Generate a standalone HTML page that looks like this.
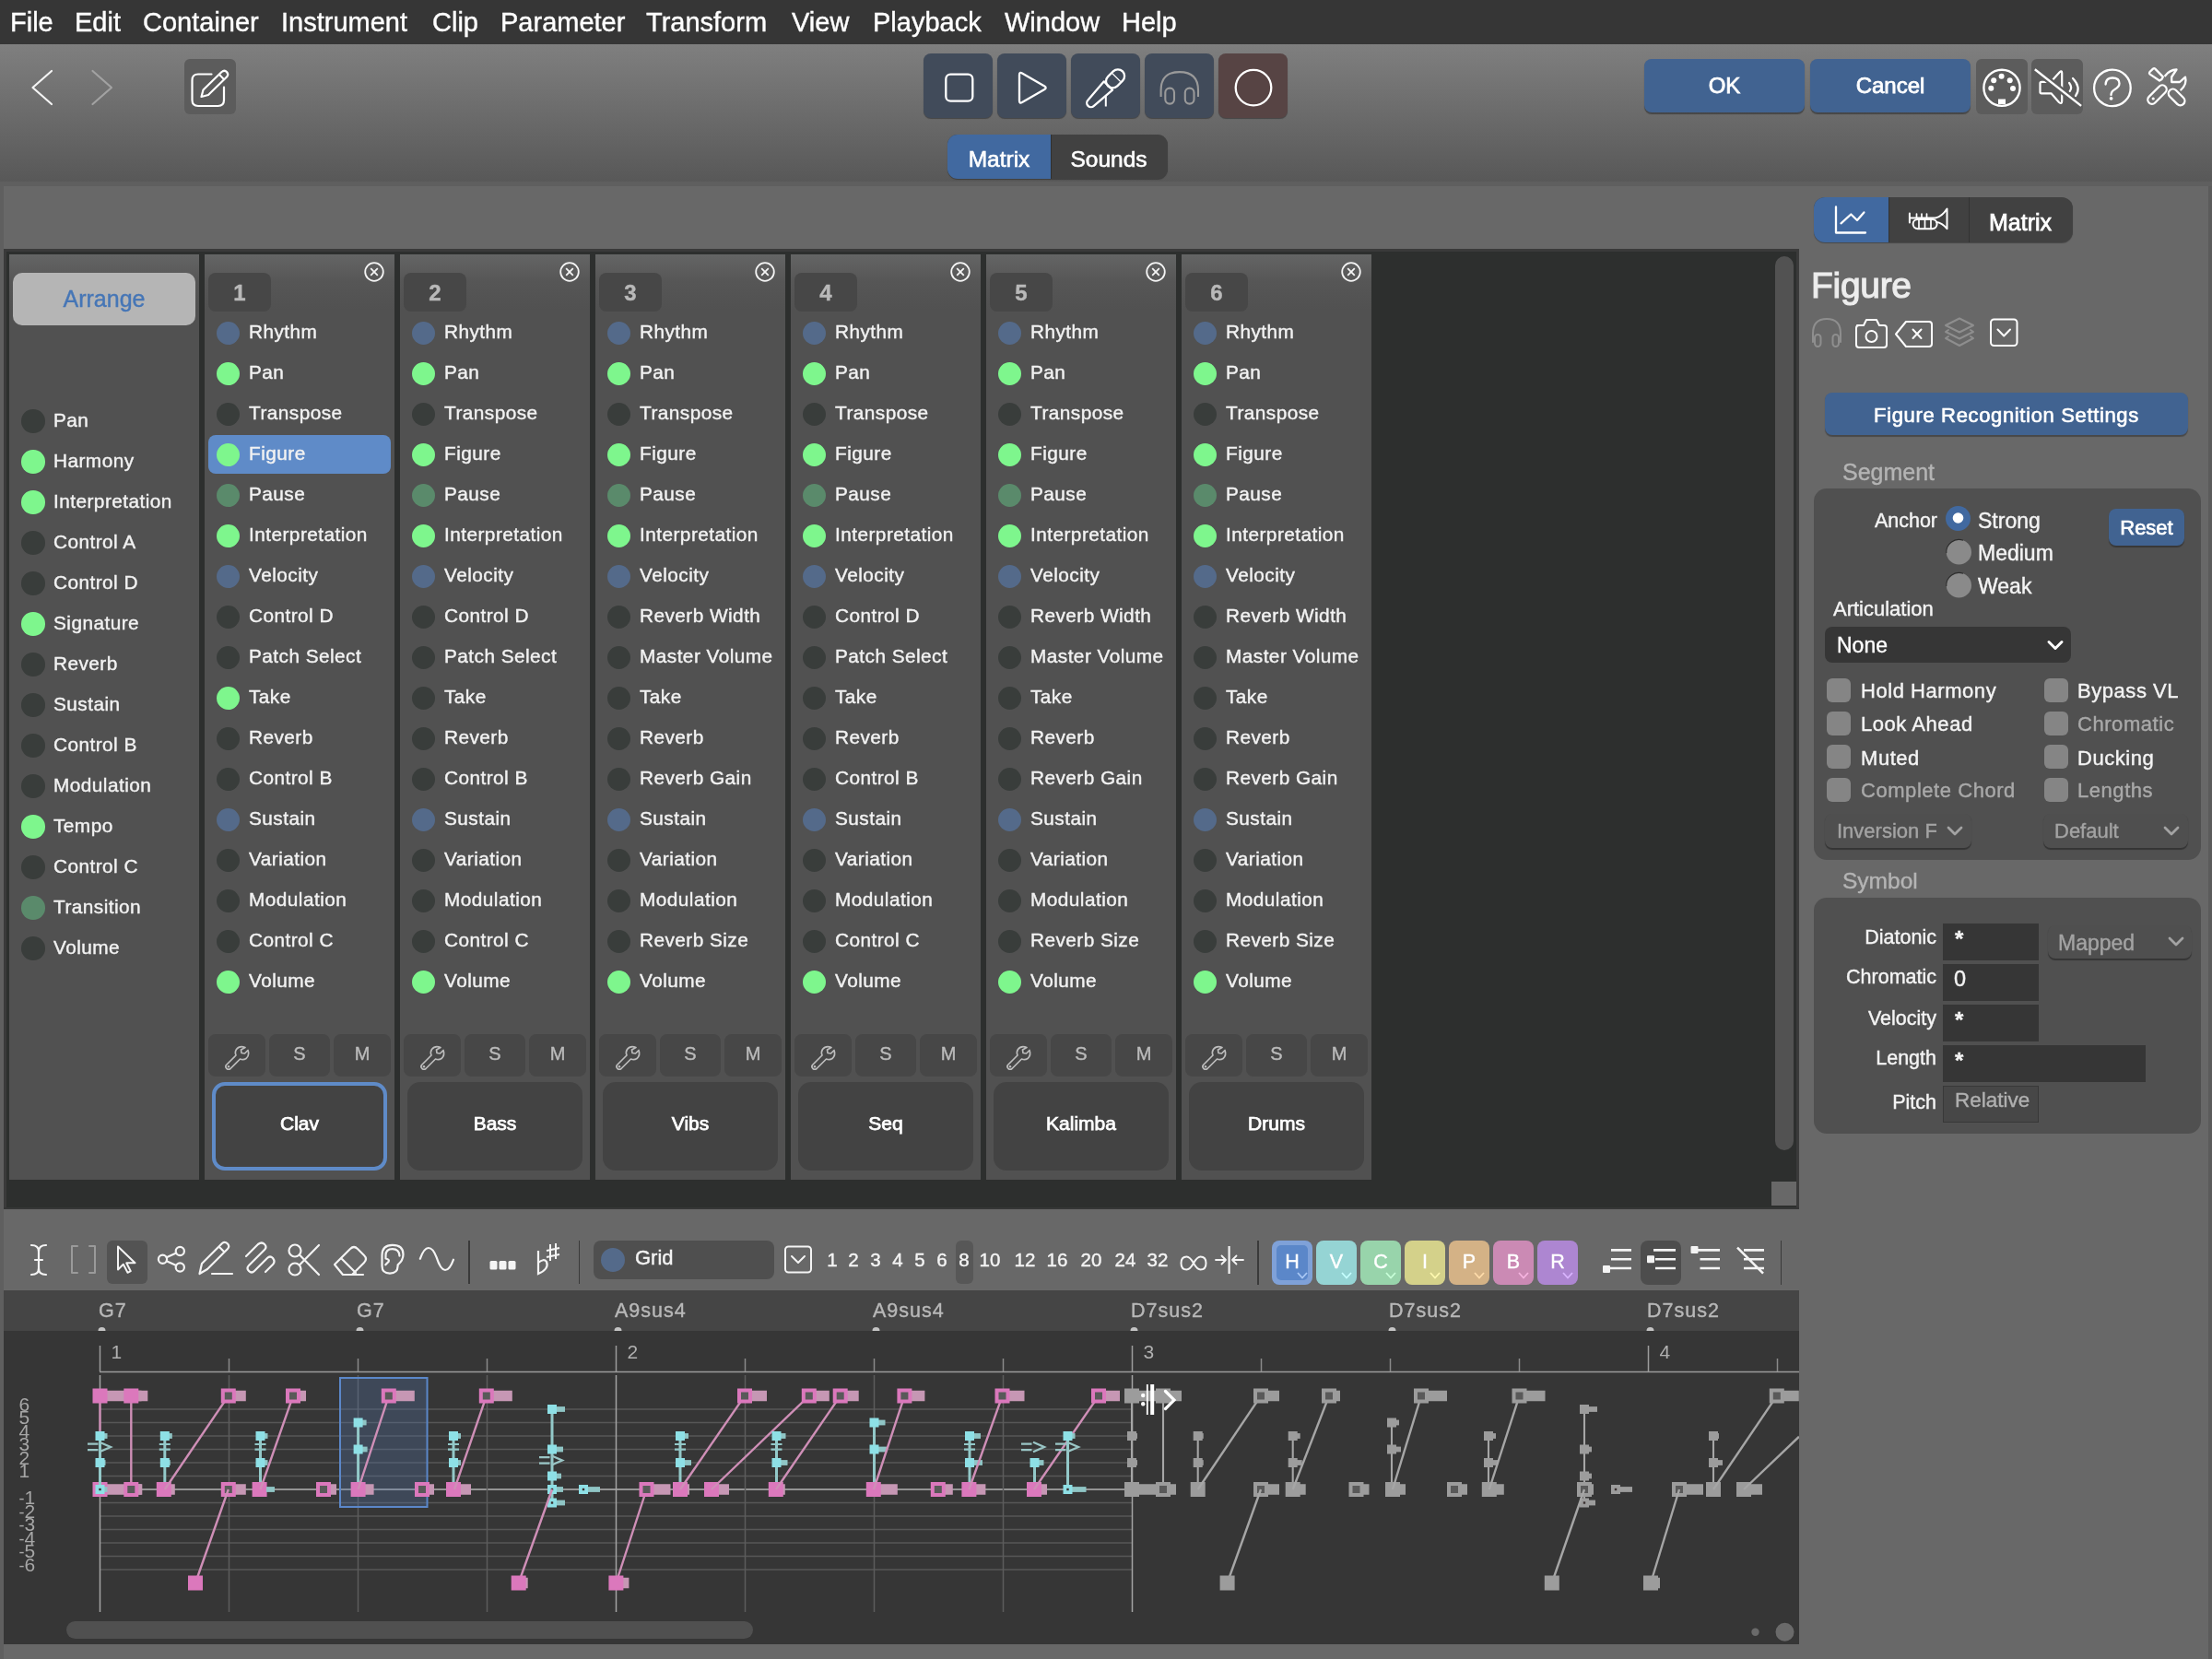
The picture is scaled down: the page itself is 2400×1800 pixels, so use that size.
<!DOCTYPE html><html><head><meta charset="utf-8"><style>
html,body{margin:0;padding:0;}
body{width:2400px;height:1800px;overflow:hidden;position:relative;background:#686868;font-family:"Liberation Sans",sans-serif;-webkit-font-smoothing:antialiased;}
.t{position:absolute;white-space:nowrap;-webkit-text-stroke:0.4px currentColor;will-change:transform;}
.r{position:absolute;}
</style></head><body>
<div class="r" style="left:0px;top:0px;width:2400px;height:48px;background:#363636;border-radius:0px;"></div>
<div class="t" style="left:11.0px;top:10.0px;font-size:29px;line-height:29px;color:#ffffff;font-weight:normal;">File</div>
<div class="t" style="left:81.0px;top:10.0px;font-size:29px;line-height:29px;color:#ffffff;font-weight:normal;">Edit</div>
<div class="t" style="left:155.0px;top:10.0px;font-size:29px;line-height:29px;color:#ffffff;font-weight:normal;">Container</div>
<div class="t" style="left:305.0px;top:10.0px;font-size:29px;line-height:29px;color:#ffffff;font-weight:normal;">Instrument</div>
<div class="t" style="left:468.5px;top:10.0px;font-size:29px;line-height:29px;color:#ffffff;font-weight:normal;">Clip</div>
<div class="t" style="left:542.5px;top:10.0px;font-size:29px;line-height:29px;color:#ffffff;font-weight:normal;">Parameter</div>
<div class="t" style="left:700.5px;top:10.0px;font-size:29px;line-height:29px;color:#ffffff;font-weight:normal;">Transform</div>
<div class="t" style="left:859.0px;top:10.0px;font-size:29px;line-height:29px;color:#ffffff;font-weight:normal;">View</div>
<div class="t" style="left:946.5px;top:10.0px;font-size:29px;line-height:29px;color:#ffffff;font-weight:normal;">Playback</div>
<div class="t" style="left:1089.5px;top:10.0px;font-size:29px;line-height:29px;color:#ffffff;font-weight:normal;">Window</div>
<div class="t" style="left:1216.5px;top:10.0px;font-size:29px;line-height:29px;color:#ffffff;font-weight:normal;">Help</div>
<div class="r" style="left:0px;top:48px;width:2400px;height:149px;background:linear-gradient(#7f7f7f,#585858);border-radius:0px;"></div>
<div class="r" style="left:0px;top:197px;width:2400px;height:5px;background:#5f5f5f;border-radius:0px;"></div>
<div class="r" style="left:0px;top:197px;width:4px;height:1603px;background:#5f5f5f;border-radius:0px;"></div>
<svg class="r" style="left:20px;top:60px;" width="120" height="70" viewBox="0 0 120 70"><path d="M36,17 L15.5,35 L36,53" fill="none" stroke="#f4f4f4" stroke-width="2.2" stroke-linecap="round" stroke-linejoin="round"/><path d="M80.5,17 L101,35 L80.5,53" fill="none" stroke="#a2a2a2" stroke-width="2.2" stroke-linecap="round" stroke-linejoin="round"/></svg>
<div class="r" style="left:200px;top:64px;width:56px;height:60px;background:#5c5c5c;border-radius:6px;"></div>
<svg class="r" style="left:200px;top:64px;" width="56" height="60" viewBox="0 0 56 60"><path d="M29.5,16.5 H15 Q8.5,16.5 8.5,23 V44.5 Q8.5,51 15,51 H36.5 Q43,51 43,44.5 V30.5" fill="none" stroke="#fff" stroke-width="2.2" stroke-linecap="round"/><path d="M18.5,41 L20.5,33.5 L40.5,14 Q43.5,11.5 46,14 Q48.5,16.8 46,19.5 L26,39 Z" fill="none" stroke="#fff" stroke-width="2.2" stroke-linejoin="round"/><path d="M37.8,16.8 L43.2,22.2" stroke="#fff" stroke-width="2"/></svg>
<div class="r" style="left:1002px;top:58px;width:75px;height:70px;background:#414b5a;border-radius:8px;box-shadow:0 1px 1px rgba(0,0,0,0.35);"></div>
<div class="r" style="left:1082px;top:58px;width:75px;height:70px;background:#414b5a;border-radius:8px;box-shadow:0 1px 1px rgba(0,0,0,0.35);"></div>
<div class="r" style="left:1162px;top:58px;width:75px;height:70px;background:#414b5a;border-radius:8px;box-shadow:0 1px 1px rgba(0,0,0,0.35);"></div>
<div class="r" style="left:1242px;top:58px;width:75px;height:70px;background:#414b5a;border-radius:8px;box-shadow:0 1px 1px rgba(0,0,0,0.35);"></div>
<div class="r" style="left:1322px;top:58px;width:75px;height:70px;background:#574444;border-radius:8px;box-shadow:0 1px 1px rgba(0,0,0,0.35);"></div>
<svg class="r" style="left:1002px;top:58px;" width="75" height="70" viewBox="0 0 75 70"><rect x="24.3" y="22.7" width="29" height="29" rx="5" fill="none" stroke="#fff" stroke-width="2.3"/></svg>
<svg class="r" style="left:1082px;top:58px;" width="75" height="70" viewBox="0 0 75 70"><path d="M24,23.2 Q24,19.8 27,21.4 L51.3,35.4 Q54,37.2 51.3,39 L27,53 Q24,54.6 24,51.3 Z" fill="none" stroke="#fff" stroke-width="2.3" stroke-linejoin="round"/></svg>
<svg class="r" style="left:1162px;top:58px;" width="75" height="70" viewBox="0 0 75 70"><g transform="translate(21.7,53.7) rotate(45)" fill="none" stroke="#fff" stroke-width="2.3" stroke-linejoin="round"><path d="M-4.5,0 A4.5,4.5 0 0 0 4.5,0 L6.5,-26.5 H-6.5 Z"/><rect x="-7.2" y="-48.5" width="14.4" height="22.5" rx="7.2"/><path d="M-6.2,-39 H6.2" stroke-width="1.1"/></g><path d="M37.8,46 V57.5" stroke="#fff" stroke-width="2"/></svg>
<svg class="r" style="left:1242px;top:58px;" width="75" height="70" viewBox="0 0 75 70"><path d="M17.6,47 V40 Q17.6,20.1 37.8,20.1 Q58,20.1 58,40 V47" fill="none" stroke="#9a9a9a" stroke-width="2.1"/><rect x="22.3" y="37.6" width="9.7" height="17" rx="4.8" fill="none" stroke="#9a9a9a" stroke-width="2.1"/><rect x="43.8" y="37.6" width="9.7" height="17" rx="4.8" fill="none" stroke="#9a9a9a" stroke-width="2.1"/></svg>
<svg class="r" style="left:1322px;top:58px;" width="75" height="70" viewBox="0 0 75 70"><circle cx="38" cy="37.1" r="19.3" fill="none" stroke="#fff" stroke-width="2.3"/></svg>
<div class="r" style="left:1028px;top:146px;width:239px;height:48px;background:#414141;border-radius:11px;box-shadow:0 1px 1px rgba(0,0,0,0.3);"></div>
<div class="r" style="left:1028px;top:146px;width:112px;height:48px;background:#4169a0;border-radius:11px;border-top-right-radius:0;border-bottom-right-radius:0;"></div>
<div class="r" style="left:1140px;top:146px;width:1px;height:48px;background:#2f2f2f;border-radius:0px;"></div>
<div class="t" style="left:1028.0px;width:112px;text-align:center;top:161.3px;font-size:24.5px;line-height:24.5px;color:#ffffff;font-weight:normal;-webkit-text-stroke:0.6px #fff;">Matrix</div>
<div class="t" style="left:1140.0px;width:126px;text-align:center;top:161.3px;font-size:24.5px;line-height:24.5px;color:#ffffff;font-weight:normal;-webkit-text-stroke:0.6px #fff;">Sounds</div>
<div class="r" style="left:1784px;top:64px;width:174px;height:58px;background:#416391;border-radius:8px;box-shadow:0 1.5px 1px rgba(0,0,0,0.35);"></div>
<div class="r" style="left:1964px;top:64px;width:174px;height:58px;background:#416391;border-radius:8px;box-shadow:0 1.5px 1px rgba(0,0,0,0.35);"></div>
<div class="t" style="left:1786.0px;width:170px;text-align:center;top:80.7px;font-size:24px;line-height:24px;color:#ffffff;font-weight:normal;-webkit-text-stroke:0.75px #fff;">OK</div>
<div class="t" style="left:1966.0px;width:170px;text-align:center;top:80.7px;font-size:24px;line-height:24px;color:#ffffff;font-weight:normal;-webkit-text-stroke:0.75px #fff;">Cancel</div>
<div class="r" style="left:2144px;top:64px;width:56px;height:60px;background:#5c5c5c;border-radius:6px;"></div>
<div class="r" style="left:2204px;top:64px;width:56px;height:60px;background:#5c5c5c;border-radius:6px;"></div>
<svg class="r" style="left:2144px;top:64px;" width="56" height="60" viewBox="0 0 56 60"><circle cx="28" cy="31.3" r="19.6" fill="none" stroke="#fff" stroke-width="2.4"/><circle cx="27.6" cy="18.7" r="3" fill="#fff"/><circle cx="19.2" cy="23.2" r="3" fill="#fff"/><circle cx="36.7" cy="23.2" r="3" fill="#fff"/><circle cx="16.3" cy="31.7" r="3" fill="#fff"/><circle cx="40" cy="31.9" r="3" fill="#fff"/><rect x="24" y="43.5" width="8" height="5.5" fill="#fff"/></svg>
<svg class="r" style="left:2204px;top:64px;" width="56" height="60" viewBox="0 0 56 60"><path d="M9.5,26.5 Q9.5,24.9 11,24.9 H21 L30.5,14.5 Q33.2,12 33.2,15 V45.5 Q33.2,49.5 30,47 L21.5,37.3 H11 Q9.5,37.3 9.5,36 Z" fill="none" stroke="#fff" stroke-width="2.2" stroke-linejoin="round"/><path d="M41.1,26 Q44.8,31 41.7,35" fill="none" stroke="#fff" stroke-width="2.2" stroke-linecap="round"/><path d="M45,21 Q54.5,31 48,40" fill="none" stroke="#fff" stroke-width="2.2" stroke-linecap="round"/><path d="M3.8,11.3 L54.1,50.9" stroke="#5c5c5c" stroke-width="7"/><path d="M3.8,11.3 L54.1,50.9" stroke="#fff" stroke-width="2.4"/></svg>
<svg class="r" style="left:2264px;top:64px;" width="60" height="60" viewBox="0 0 60 60"><circle cx="27.9" cy="31.4" r="19.8" fill="none" stroke="#fff" stroke-width="2.3"/><path d="M20.6,27.5 Q20.8,20.5 28,20.5 Q35.5,20.5 35.5,26.5 Q35.5,30 30.5,33 Q26.5,35.2 26.5,39" fill="none" stroke="#fff" stroke-width="2.3" stroke-linecap="round"/><circle cx="26.6" cy="42.8" r="1.9" fill="#fff"/></svg>
<svg class="r" style="left:2324px;top:64px;" width="60" height="60" viewBox="0 0 60 60"><g fill="none" stroke="#fff" stroke-width="2.3" stroke-linejoin="round" stroke-linecap="round"><path d="M8.4,16.4 Q7.5,15.2 8.5,14 L12,10.6 Q13.2,9.7 14.3,10.6 L22.8,19.4 L21.5,22 L19,23.5 Z"/><rect x="-10.5" y="-4.8" width="21" height="9.6" rx="4.8" transform="translate(37.6,41.4) rotate(45)"/><rect x="-12.5" y="-4.6" width="25" height="9.2" rx="4.6" transform="translate(16.5,38.6) rotate(-45)"/><path d="M25.2,18.2 Q30,11.8 37.5,11.5 L32.2,19.5 V25 H41 L47,19.6 Q49.2,27 42.3,33.5"/></g><circle cx="12.2" cy="43" r="1.6" fill="#fff"/></svg>
<div class="r" style="left:4px;top:270px;width:1948px;height:1042px;background:#2d2f2e;border-radius:0px;"></div>
<div class="r" style="left:10px;top:276px;width:206px;height:1004px;background:linear-gradient(#646565 0px,#565656 30px,#515151 60px);border-radius:0px;"></div>
<div class="r" style="left:14px;top:296px;width:198px;height:57px;background:#b5b5b5;border-radius:10px;"></div>
<div class="t" style="left:14.0px;width:198px;text-align:center;top:311.8px;font-size:25px;line-height:25px;color:#4676b6;font-weight:normal;">Arrange</div>
<div class="r" style="left:23.25px;top:444.45px;width:25.5px;height:25.5px;background:#393d3b;border-radius:12.75px;"></div>
<div class="t" style="left:58px;top:445.9px;font-size:20.8px;line-height:20.8px;color:#f2f2f2;font-weight:normal;letter-spacing:0.45px;">Pan</div>
<div class="r" style="left:23.25px;top:488.45px;width:25.5px;height:25.5px;background:#7ef68d;border-radius:12.75px;"></div>
<div class="t" style="left:58px;top:489.9px;font-size:20.8px;line-height:20.8px;color:#f2f2f2;font-weight:normal;letter-spacing:0.45px;">Harmony</div>
<div class="r" style="left:23.25px;top:532.45px;width:25.5px;height:25.5px;background:#7ef68d;border-radius:12.75px;"></div>
<div class="t" style="left:58px;top:533.9px;font-size:20.8px;line-height:20.8px;color:#f2f2f2;font-weight:normal;letter-spacing:0.45px;">Interpretation</div>
<div class="r" style="left:23.25px;top:576.45px;width:25.5px;height:25.5px;background:#393d3b;border-radius:12.75px;"></div>
<div class="t" style="left:58px;top:577.9px;font-size:20.8px;line-height:20.8px;color:#f2f2f2;font-weight:normal;letter-spacing:0.45px;">Control A</div>
<div class="r" style="left:23.25px;top:620.45px;width:25.5px;height:25.5px;background:#393d3b;border-radius:12.75px;"></div>
<div class="t" style="left:58px;top:621.9px;font-size:20.8px;line-height:20.8px;color:#f2f2f2;font-weight:normal;letter-spacing:0.45px;">Control D</div>
<div class="r" style="left:23.25px;top:664.45px;width:25.5px;height:25.5px;background:#7ef68d;border-radius:12.75px;"></div>
<div class="t" style="left:58px;top:665.9px;font-size:20.8px;line-height:20.8px;color:#f2f2f2;font-weight:normal;letter-spacing:0.45px;">Signature</div>
<div class="r" style="left:23.25px;top:708.45px;width:25.5px;height:25.5px;background:#393d3b;border-radius:12.75px;"></div>
<div class="t" style="left:58px;top:709.9px;font-size:20.8px;line-height:20.8px;color:#f2f2f2;font-weight:normal;letter-spacing:0.45px;">Reverb</div>
<div class="r" style="left:23.25px;top:752.45px;width:25.5px;height:25.5px;background:#393d3b;border-radius:12.75px;"></div>
<div class="t" style="left:58px;top:753.9px;font-size:20.8px;line-height:20.8px;color:#f2f2f2;font-weight:normal;letter-spacing:0.45px;">Sustain</div>
<div class="r" style="left:23.25px;top:796.45px;width:25.5px;height:25.5px;background:#393d3b;border-radius:12.75px;"></div>
<div class="t" style="left:58px;top:797.9px;font-size:20.8px;line-height:20.8px;color:#f2f2f2;font-weight:normal;letter-spacing:0.45px;">Control B</div>
<div class="r" style="left:23.25px;top:840.45px;width:25.5px;height:25.5px;background:#393d3b;border-radius:12.75px;"></div>
<div class="t" style="left:58px;top:841.9px;font-size:20.8px;line-height:20.8px;color:#f2f2f2;font-weight:normal;letter-spacing:0.45px;">Modulation</div>
<div class="r" style="left:23.25px;top:884.45px;width:25.5px;height:25.5px;background:#7ef68d;border-radius:12.75px;"></div>
<div class="t" style="left:58px;top:885.9px;font-size:20.8px;line-height:20.8px;color:#f2f2f2;font-weight:normal;letter-spacing:0.45px;">Tempo</div>
<div class="r" style="left:23.25px;top:928.45px;width:25.5px;height:25.5px;background:#393d3b;border-radius:12.75px;"></div>
<div class="t" style="left:58px;top:929.9px;font-size:20.8px;line-height:20.8px;color:#f2f2f2;font-weight:normal;letter-spacing:0.45px;">Control C</div>
<div class="r" style="left:23.25px;top:972.45px;width:25.5px;height:25.5px;background:#5a8a6b;border-radius:12.75px;"></div>
<div class="t" style="left:58px;top:973.9px;font-size:20.8px;line-height:20.8px;color:#f2f2f2;font-weight:normal;letter-spacing:0.45px;">Transition</div>
<div class="r" style="left:23.25px;top:1016.45px;width:25.5px;height:25.5px;background:#393d3b;border-radius:12.75px;"></div>
<div class="t" style="left:58px;top:1017.9px;font-size:20.8px;line-height:20.8px;color:#f2f2f2;font-weight:normal;letter-spacing:0.45px;">Volume</div>
<div class="r" style="left:222px;top:276px;width:206px;height:1004px;background:linear-gradient(#646565 0px,#565656 30px,#515151 60px);border-radius:0px;"></div>
<div class="r" style="left:226px;top:296px;width:68px;height:42px;background:#474747;border-radius:8px;"></div>
<div class="t" style="left:225.7px;width:68px;text-align:center;top:305.7px;font-size:24px;line-height:24px;color:#b9b9b9;font-weight:bold;">1</div>
<svg class="r" style="left:394px;top:283px;" width="24" height="24" viewBox="0 0 24 24"><circle cx="12" cy="12" r="9.8" fill="none" stroke="#f4f4f4" stroke-width="1.8"/><path d="M8.2,8.2 L15.8,15.8 M15.8,8.2 L8.2,15.8" stroke="#f4f4f4" stroke-width="1.8"/></svg>
<div class="r" style="left:226px;top:472px;width:198px;height:42px;background:#5f8bc8;border-radius:8px;"></div>
<div class="r" style="left:234.75px;top:348.55px;width:25.5px;height:25.5px;background:#546a8a;border-radius:12.75px;"></div>
<div class="t" style="left:270.1px;top:350.0px;font-size:20.8px;line-height:20.8px;color:#f2f2f2;font-weight:normal;letter-spacing:0.45px;">Rhythm</div>
<div class="r" style="left:234.75px;top:392.55px;width:25.5px;height:25.5px;background:#7ef68d;border-radius:12.75px;"></div>
<div class="t" style="left:270.1px;top:394.0px;font-size:20.8px;line-height:20.8px;color:#f2f2f2;font-weight:normal;letter-spacing:0.45px;">Pan</div>
<div class="r" style="left:234.75px;top:436.55px;width:25.5px;height:25.5px;background:#393d3b;border-radius:12.75px;"></div>
<div class="t" style="left:270.1px;top:438.0px;font-size:20.8px;line-height:20.8px;color:#f2f2f2;font-weight:normal;letter-spacing:0.45px;">Transpose</div>
<div class="r" style="left:234.75px;top:480.55px;width:25.5px;height:25.5px;background:#7ef68d;border-radius:12.75px;"></div>
<div class="t" style="left:270.1px;top:482.0px;font-size:20.8px;line-height:20.8px;color:#f2f2f2;font-weight:normal;letter-spacing:0.45px;">Figure</div>
<div class="r" style="left:234.75px;top:524.55px;width:25.5px;height:25.5px;background:#5a8a6b;border-radius:12.75px;"></div>
<div class="t" style="left:270.1px;top:526.0px;font-size:20.8px;line-height:20.8px;color:#f2f2f2;font-weight:normal;letter-spacing:0.45px;">Pause</div>
<div class="r" style="left:234.75px;top:568.55px;width:25.5px;height:25.5px;background:#7ef68d;border-radius:12.75px;"></div>
<div class="t" style="left:270.1px;top:570.0px;font-size:20.8px;line-height:20.8px;color:#f2f2f2;font-weight:normal;letter-spacing:0.45px;">Interpretation</div>
<div class="r" style="left:234.75px;top:612.55px;width:25.5px;height:25.5px;background:#546a8a;border-radius:12.75px;"></div>
<div class="t" style="left:270.1px;top:614.0px;font-size:20.8px;line-height:20.8px;color:#f2f2f2;font-weight:normal;letter-spacing:0.45px;">Velocity</div>
<div class="r" style="left:234.75px;top:656.55px;width:25.5px;height:25.5px;background:#393d3b;border-radius:12.75px;"></div>
<div class="t" style="left:270.1px;top:658.0px;font-size:20.8px;line-height:20.8px;color:#f2f2f2;font-weight:normal;letter-spacing:0.45px;">Control D</div>
<div class="r" style="left:234.75px;top:700.55px;width:25.5px;height:25.5px;background:#393d3b;border-radius:12.75px;"></div>
<div class="t" style="left:270.1px;top:702.0px;font-size:20.8px;line-height:20.8px;color:#f2f2f2;font-weight:normal;letter-spacing:0.45px;">Patch Select</div>
<div class="r" style="left:234.75px;top:744.55px;width:25.5px;height:25.5px;background:#7ef68d;border-radius:12.75px;"></div>
<div class="t" style="left:270.1px;top:746.0px;font-size:20.8px;line-height:20.8px;color:#f2f2f2;font-weight:normal;letter-spacing:0.45px;">Take</div>
<div class="r" style="left:234.75px;top:788.55px;width:25.5px;height:25.5px;background:#393d3b;border-radius:12.75px;"></div>
<div class="t" style="left:270.1px;top:790.0px;font-size:20.8px;line-height:20.8px;color:#f2f2f2;font-weight:normal;letter-spacing:0.45px;">Reverb</div>
<div class="r" style="left:234.75px;top:832.55px;width:25.5px;height:25.5px;background:#393d3b;border-radius:12.75px;"></div>
<div class="t" style="left:270.1px;top:834.0px;font-size:20.8px;line-height:20.8px;color:#f2f2f2;font-weight:normal;letter-spacing:0.45px;">Control B</div>
<div class="r" style="left:234.75px;top:876.55px;width:25.5px;height:25.5px;background:#546a8a;border-radius:12.75px;"></div>
<div class="t" style="left:270.1px;top:878.0px;font-size:20.8px;line-height:20.8px;color:#f2f2f2;font-weight:normal;letter-spacing:0.45px;">Sustain</div>
<div class="r" style="left:234.75px;top:920.55px;width:25.5px;height:25.5px;background:#393d3b;border-radius:12.75px;"></div>
<div class="t" style="left:270.1px;top:922.0px;font-size:20.8px;line-height:20.8px;color:#f2f2f2;font-weight:normal;letter-spacing:0.45px;">Variation</div>
<div class="r" style="left:234.75px;top:964.55px;width:25.5px;height:25.5px;background:#393d3b;border-radius:12.75px;"></div>
<div class="t" style="left:270.1px;top:966.0px;font-size:20.8px;line-height:20.8px;color:#f2f2f2;font-weight:normal;letter-spacing:0.45px;">Modulation</div>
<div class="r" style="left:234.75px;top:1008.55px;width:25.5px;height:25.5px;background:#393d3b;border-radius:12.75px;"></div>
<div class="t" style="left:270.1px;top:1010.0px;font-size:20.8px;line-height:20.8px;color:#f2f2f2;font-weight:normal;letter-spacing:0.45px;">Control C</div>
<div class="r" style="left:234.75px;top:1052.55px;width:25.5px;height:25.5px;background:#7ef68d;border-radius:12.75px;"></div>
<div class="t" style="left:270.1px;top:1054.0px;font-size:20.8px;line-height:20.8px;color:#f2f2f2;font-weight:normal;letter-spacing:0.45px;">Volume</div>
<div class="r" style="left:226px;top:1122px;width:62px;height:46px;background:#474747;border-radius:8px;"></div>
<div class="r" style="left:292px;top:1122px;width:66px;height:46px;background:#474747;border-radius:8px;"></div>
<div class="r" style="left:362px;top:1122px;width:62px;height:46px;background:#474747;border-radius:8px;"></div>
<svg class="r" style="left:226px;top:1122px;" width="62" height="46" viewBox="0 0 62 46"><path d="M40,14.5 Q34,12 30.5,16.5 Q28.5,19.5 30,23 L19.5,33.5 Q18,35.5 20,37.5 Q22,39 24,37.5 L34.5,27 Q38,28.5 41,26.5 Q45,23 43,17.5 L39.5,21 L36,20.5 L35.5,17 Z" fill="none" stroke="#bdbdbd" stroke-width="1.7" stroke-linejoin="round"/><circle cx="22" cy="35.3" r="1.2" fill="#bdbdbd"/></svg>
<div class="t" style="left:292.0px;width:66px;text-align:center;top:1132.6px;font-size:20px;line-height:20px;color:#bbbbbb;font-weight:normal;">S</div>
<div class="t" style="left:362.0px;width:62px;text-align:center;top:1132.6px;font-size:20px;line-height:20px;color:#bbbbbb;font-weight:normal;">M</div>
<div class="r" style="left:230px;top:1174px;width:190px;height:96px;background:#434343;border-radius:14px;box-sizing:border-box;border:4.5px solid #5f8bc8;"></div>
<div class="t" style="left:230.0px;width:190px;text-align:center;top:1208.2px;font-size:21px;line-height:21px;color:#ffffff;font-weight:normal;-webkit-text-stroke:0.75px #fff;">Clav</div>
<div class="r" style="left:434px;top:276px;width:206px;height:1004px;background:linear-gradient(#646565 0px,#565656 30px,#515151 60px);border-radius:0px;"></div>
<div class="r" style="left:438px;top:296px;width:68px;height:42px;background:#474747;border-radius:8px;"></div>
<div class="t" style="left:437.7px;width:68px;text-align:center;top:305.7px;font-size:24px;line-height:24px;color:#b9b9b9;font-weight:bold;">2</div>
<svg class="r" style="left:606px;top:283px;" width="24" height="24" viewBox="0 0 24 24"><circle cx="12" cy="12" r="9.8" fill="none" stroke="#f4f4f4" stroke-width="1.8"/><path d="M8.2,8.2 L15.8,15.8 M15.8,8.2 L8.2,15.8" stroke="#f4f4f4" stroke-width="1.8"/></svg>
<div class="r" style="left:446.75px;top:348.55px;width:25.5px;height:25.5px;background:#546a8a;border-radius:12.75px;"></div>
<div class="t" style="left:482.1px;top:350.0px;font-size:20.8px;line-height:20.8px;color:#f2f2f2;font-weight:normal;letter-spacing:0.45px;">Rhythm</div>
<div class="r" style="left:446.75px;top:392.55px;width:25.5px;height:25.5px;background:#7ef68d;border-radius:12.75px;"></div>
<div class="t" style="left:482.1px;top:394.0px;font-size:20.8px;line-height:20.8px;color:#f2f2f2;font-weight:normal;letter-spacing:0.45px;">Pan</div>
<div class="r" style="left:446.75px;top:436.55px;width:25.5px;height:25.5px;background:#393d3b;border-radius:12.75px;"></div>
<div class="t" style="left:482.1px;top:438.0px;font-size:20.8px;line-height:20.8px;color:#f2f2f2;font-weight:normal;letter-spacing:0.45px;">Transpose</div>
<div class="r" style="left:446.75px;top:480.55px;width:25.5px;height:25.5px;background:#7ef68d;border-radius:12.75px;"></div>
<div class="t" style="left:482.1px;top:482.0px;font-size:20.8px;line-height:20.8px;color:#f2f2f2;font-weight:normal;letter-spacing:0.45px;">Figure</div>
<div class="r" style="left:446.75px;top:524.55px;width:25.5px;height:25.5px;background:#5a8a6b;border-radius:12.75px;"></div>
<div class="t" style="left:482.1px;top:526.0px;font-size:20.8px;line-height:20.8px;color:#f2f2f2;font-weight:normal;letter-spacing:0.45px;">Pause</div>
<div class="r" style="left:446.75px;top:568.55px;width:25.5px;height:25.5px;background:#7ef68d;border-radius:12.75px;"></div>
<div class="t" style="left:482.1px;top:570.0px;font-size:20.8px;line-height:20.8px;color:#f2f2f2;font-weight:normal;letter-spacing:0.45px;">Interpretation</div>
<div class="r" style="left:446.75px;top:612.55px;width:25.5px;height:25.5px;background:#546a8a;border-radius:12.75px;"></div>
<div class="t" style="left:482.1px;top:614.0px;font-size:20.8px;line-height:20.8px;color:#f2f2f2;font-weight:normal;letter-spacing:0.45px;">Velocity</div>
<div class="r" style="left:446.75px;top:656.55px;width:25.5px;height:25.5px;background:#393d3b;border-radius:12.75px;"></div>
<div class="t" style="left:482.1px;top:658.0px;font-size:20.8px;line-height:20.8px;color:#f2f2f2;font-weight:normal;letter-spacing:0.45px;">Control D</div>
<div class="r" style="left:446.75px;top:700.55px;width:25.5px;height:25.5px;background:#393d3b;border-radius:12.75px;"></div>
<div class="t" style="left:482.1px;top:702.0px;font-size:20.8px;line-height:20.8px;color:#f2f2f2;font-weight:normal;letter-spacing:0.45px;">Patch Select</div>
<div class="r" style="left:446.75px;top:744.55px;width:25.5px;height:25.5px;background:#393d3b;border-radius:12.75px;"></div>
<div class="t" style="left:482.1px;top:746.0px;font-size:20.8px;line-height:20.8px;color:#f2f2f2;font-weight:normal;letter-spacing:0.45px;">Take</div>
<div class="r" style="left:446.75px;top:788.55px;width:25.5px;height:25.5px;background:#393d3b;border-radius:12.75px;"></div>
<div class="t" style="left:482.1px;top:790.0px;font-size:20.8px;line-height:20.8px;color:#f2f2f2;font-weight:normal;letter-spacing:0.45px;">Reverb</div>
<div class="r" style="left:446.75px;top:832.55px;width:25.5px;height:25.5px;background:#393d3b;border-radius:12.75px;"></div>
<div class="t" style="left:482.1px;top:834.0px;font-size:20.8px;line-height:20.8px;color:#f2f2f2;font-weight:normal;letter-spacing:0.45px;">Control B</div>
<div class="r" style="left:446.75px;top:876.55px;width:25.5px;height:25.5px;background:#546a8a;border-radius:12.75px;"></div>
<div class="t" style="left:482.1px;top:878.0px;font-size:20.8px;line-height:20.8px;color:#f2f2f2;font-weight:normal;letter-spacing:0.45px;">Sustain</div>
<div class="r" style="left:446.75px;top:920.55px;width:25.5px;height:25.5px;background:#393d3b;border-radius:12.75px;"></div>
<div class="t" style="left:482.1px;top:922.0px;font-size:20.8px;line-height:20.8px;color:#f2f2f2;font-weight:normal;letter-spacing:0.45px;">Variation</div>
<div class="r" style="left:446.75px;top:964.55px;width:25.5px;height:25.5px;background:#393d3b;border-radius:12.75px;"></div>
<div class="t" style="left:482.1px;top:966.0px;font-size:20.8px;line-height:20.8px;color:#f2f2f2;font-weight:normal;letter-spacing:0.45px;">Modulation</div>
<div class="r" style="left:446.75px;top:1008.55px;width:25.5px;height:25.5px;background:#393d3b;border-radius:12.75px;"></div>
<div class="t" style="left:482.1px;top:1010.0px;font-size:20.8px;line-height:20.8px;color:#f2f2f2;font-weight:normal;letter-spacing:0.45px;">Control C</div>
<div class="r" style="left:446.75px;top:1052.55px;width:25.5px;height:25.5px;background:#7ef68d;border-radius:12.75px;"></div>
<div class="t" style="left:482.1px;top:1054.0px;font-size:20.8px;line-height:20.8px;color:#f2f2f2;font-weight:normal;letter-spacing:0.45px;">Volume</div>
<div class="r" style="left:438px;top:1122px;width:62px;height:46px;background:#474747;border-radius:8px;"></div>
<div class="r" style="left:504px;top:1122px;width:66px;height:46px;background:#474747;border-radius:8px;"></div>
<div class="r" style="left:574px;top:1122px;width:62px;height:46px;background:#474747;border-radius:8px;"></div>
<svg class="r" style="left:438px;top:1122px;" width="62" height="46" viewBox="0 0 62 46"><path d="M40,14.5 Q34,12 30.5,16.5 Q28.5,19.5 30,23 L19.5,33.5 Q18,35.5 20,37.5 Q22,39 24,37.5 L34.5,27 Q38,28.5 41,26.5 Q45,23 43,17.5 L39.5,21 L36,20.5 L35.5,17 Z" fill="none" stroke="#bdbdbd" stroke-width="1.7" stroke-linejoin="round"/><circle cx="22" cy="35.3" r="1.2" fill="#bdbdbd"/></svg>
<div class="t" style="left:504.0px;width:66px;text-align:center;top:1132.6px;font-size:20px;line-height:20px;color:#bbbbbb;font-weight:normal;">S</div>
<div class="t" style="left:574.0px;width:62px;text-align:center;top:1132.6px;font-size:20px;line-height:20px;color:#bbbbbb;font-weight:normal;">M</div>
<div class="r" style="left:442px;top:1174px;width:190px;height:96px;background:#434343;border-radius:14px;"></div>
<div class="t" style="left:442.0px;width:190px;text-align:center;top:1208.2px;font-size:21px;line-height:21px;color:#ffffff;font-weight:normal;-webkit-text-stroke:0.75px #fff;">Bass</div>
<div class="r" style="left:646px;top:276px;width:206px;height:1004px;background:linear-gradient(#646565 0px,#565656 30px,#515151 60px);border-radius:0px;"></div>
<div class="r" style="left:650px;top:296px;width:68px;height:42px;background:#474747;border-radius:8px;"></div>
<div class="t" style="left:649.7px;width:68px;text-align:center;top:305.7px;font-size:24px;line-height:24px;color:#b9b9b9;font-weight:bold;">3</div>
<svg class="r" style="left:818px;top:283px;" width="24" height="24" viewBox="0 0 24 24"><circle cx="12" cy="12" r="9.8" fill="none" stroke="#f4f4f4" stroke-width="1.8"/><path d="M8.2,8.2 L15.8,15.8 M15.8,8.2 L8.2,15.8" stroke="#f4f4f4" stroke-width="1.8"/></svg>
<div class="r" style="left:658.75px;top:348.55px;width:25.5px;height:25.5px;background:#546a8a;border-radius:12.75px;"></div>
<div class="t" style="left:694.1px;top:350.0px;font-size:20.8px;line-height:20.8px;color:#f2f2f2;font-weight:normal;letter-spacing:0.45px;">Rhythm</div>
<div class="r" style="left:658.75px;top:392.55px;width:25.5px;height:25.5px;background:#7ef68d;border-radius:12.75px;"></div>
<div class="t" style="left:694.1px;top:394.0px;font-size:20.8px;line-height:20.8px;color:#f2f2f2;font-weight:normal;letter-spacing:0.45px;">Pan</div>
<div class="r" style="left:658.75px;top:436.55px;width:25.5px;height:25.5px;background:#393d3b;border-radius:12.75px;"></div>
<div class="t" style="left:694.1px;top:438.0px;font-size:20.8px;line-height:20.8px;color:#f2f2f2;font-weight:normal;letter-spacing:0.45px;">Transpose</div>
<div class="r" style="left:658.75px;top:480.55px;width:25.5px;height:25.5px;background:#7ef68d;border-radius:12.75px;"></div>
<div class="t" style="left:694.1px;top:482.0px;font-size:20.8px;line-height:20.8px;color:#f2f2f2;font-weight:normal;letter-spacing:0.45px;">Figure</div>
<div class="r" style="left:658.75px;top:524.55px;width:25.5px;height:25.5px;background:#5a8a6b;border-radius:12.75px;"></div>
<div class="t" style="left:694.1px;top:526.0px;font-size:20.8px;line-height:20.8px;color:#f2f2f2;font-weight:normal;letter-spacing:0.45px;">Pause</div>
<div class="r" style="left:658.75px;top:568.55px;width:25.5px;height:25.5px;background:#7ef68d;border-radius:12.75px;"></div>
<div class="t" style="left:694.1px;top:570.0px;font-size:20.8px;line-height:20.8px;color:#f2f2f2;font-weight:normal;letter-spacing:0.45px;">Interpretation</div>
<div class="r" style="left:658.75px;top:612.55px;width:25.5px;height:25.5px;background:#546a8a;border-radius:12.75px;"></div>
<div class="t" style="left:694.1px;top:614.0px;font-size:20.8px;line-height:20.8px;color:#f2f2f2;font-weight:normal;letter-spacing:0.45px;">Velocity</div>
<div class="r" style="left:658.75px;top:656.55px;width:25.5px;height:25.5px;background:#393d3b;border-radius:12.75px;"></div>
<div class="t" style="left:694.1px;top:658.0px;font-size:20.8px;line-height:20.8px;color:#f2f2f2;font-weight:normal;letter-spacing:0.45px;">Reverb Width</div>
<div class="r" style="left:658.75px;top:700.55px;width:25.5px;height:25.5px;background:#393d3b;border-radius:12.75px;"></div>
<div class="t" style="left:694.1px;top:702.0px;font-size:20.8px;line-height:20.8px;color:#f2f2f2;font-weight:normal;letter-spacing:0.45px;">Master Volume</div>
<div class="r" style="left:658.75px;top:744.55px;width:25.5px;height:25.5px;background:#393d3b;border-radius:12.75px;"></div>
<div class="t" style="left:694.1px;top:746.0px;font-size:20.8px;line-height:20.8px;color:#f2f2f2;font-weight:normal;letter-spacing:0.45px;">Take</div>
<div class="r" style="left:658.75px;top:788.55px;width:25.5px;height:25.5px;background:#393d3b;border-radius:12.75px;"></div>
<div class="t" style="left:694.1px;top:790.0px;font-size:20.8px;line-height:20.8px;color:#f2f2f2;font-weight:normal;letter-spacing:0.45px;">Reverb</div>
<div class="r" style="left:658.75px;top:832.55px;width:25.5px;height:25.5px;background:#393d3b;border-radius:12.75px;"></div>
<div class="t" style="left:694.1px;top:834.0px;font-size:20.8px;line-height:20.8px;color:#f2f2f2;font-weight:normal;letter-spacing:0.45px;">Reverb Gain</div>
<div class="r" style="left:658.75px;top:876.55px;width:25.5px;height:25.5px;background:#546a8a;border-radius:12.75px;"></div>
<div class="t" style="left:694.1px;top:878.0px;font-size:20.8px;line-height:20.8px;color:#f2f2f2;font-weight:normal;letter-spacing:0.45px;">Sustain</div>
<div class="r" style="left:658.75px;top:920.55px;width:25.5px;height:25.5px;background:#393d3b;border-radius:12.75px;"></div>
<div class="t" style="left:694.1px;top:922.0px;font-size:20.8px;line-height:20.8px;color:#f2f2f2;font-weight:normal;letter-spacing:0.45px;">Variation</div>
<div class="r" style="left:658.75px;top:964.55px;width:25.5px;height:25.5px;background:#393d3b;border-radius:12.75px;"></div>
<div class="t" style="left:694.1px;top:966.0px;font-size:20.8px;line-height:20.8px;color:#f2f2f2;font-weight:normal;letter-spacing:0.45px;">Modulation</div>
<div class="r" style="left:658.75px;top:1008.55px;width:25.5px;height:25.5px;background:#393d3b;border-radius:12.75px;"></div>
<div class="t" style="left:694.1px;top:1010.0px;font-size:20.8px;line-height:20.8px;color:#f2f2f2;font-weight:normal;letter-spacing:0.45px;">Reverb Size</div>
<div class="r" style="left:658.75px;top:1052.55px;width:25.5px;height:25.5px;background:#7ef68d;border-radius:12.75px;"></div>
<div class="t" style="left:694.1px;top:1054.0px;font-size:20.8px;line-height:20.8px;color:#f2f2f2;font-weight:normal;letter-spacing:0.45px;">Volume</div>
<div class="r" style="left:650px;top:1122px;width:62px;height:46px;background:#474747;border-radius:8px;"></div>
<div class="r" style="left:716px;top:1122px;width:66px;height:46px;background:#474747;border-radius:8px;"></div>
<div class="r" style="left:786px;top:1122px;width:62px;height:46px;background:#474747;border-radius:8px;"></div>
<svg class="r" style="left:650px;top:1122px;" width="62" height="46" viewBox="0 0 62 46"><path d="M40,14.5 Q34,12 30.5,16.5 Q28.5,19.5 30,23 L19.5,33.5 Q18,35.5 20,37.5 Q22,39 24,37.5 L34.5,27 Q38,28.5 41,26.5 Q45,23 43,17.5 L39.5,21 L36,20.5 L35.5,17 Z" fill="none" stroke="#bdbdbd" stroke-width="1.7" stroke-linejoin="round"/><circle cx="22" cy="35.3" r="1.2" fill="#bdbdbd"/></svg>
<div class="t" style="left:716.0px;width:66px;text-align:center;top:1132.6px;font-size:20px;line-height:20px;color:#bbbbbb;font-weight:normal;">S</div>
<div class="t" style="left:786.0px;width:62px;text-align:center;top:1132.6px;font-size:20px;line-height:20px;color:#bbbbbb;font-weight:normal;">M</div>
<div class="r" style="left:654px;top:1174px;width:190px;height:96px;background:#434343;border-radius:14px;"></div>
<div class="t" style="left:654.0px;width:190px;text-align:center;top:1208.2px;font-size:21px;line-height:21px;color:#ffffff;font-weight:normal;-webkit-text-stroke:0.75px #fff;">Vibs</div>
<div class="r" style="left:858px;top:276px;width:206px;height:1004px;background:linear-gradient(#646565 0px,#565656 30px,#515151 60px);border-radius:0px;"></div>
<div class="r" style="left:862px;top:296px;width:68px;height:42px;background:#474747;border-radius:8px;"></div>
<div class="t" style="left:861.7px;width:68px;text-align:center;top:305.7px;font-size:24px;line-height:24px;color:#b9b9b9;font-weight:bold;">4</div>
<svg class="r" style="left:1030px;top:283px;" width="24" height="24" viewBox="0 0 24 24"><circle cx="12" cy="12" r="9.8" fill="none" stroke="#f4f4f4" stroke-width="1.8"/><path d="M8.2,8.2 L15.8,15.8 M15.8,8.2 L8.2,15.8" stroke="#f4f4f4" stroke-width="1.8"/></svg>
<div class="r" style="left:870.75px;top:348.55px;width:25.5px;height:25.5px;background:#546a8a;border-radius:12.75px;"></div>
<div class="t" style="left:906.1px;top:350.0px;font-size:20.8px;line-height:20.8px;color:#f2f2f2;font-weight:normal;letter-spacing:0.45px;">Rhythm</div>
<div class="r" style="left:870.75px;top:392.55px;width:25.5px;height:25.5px;background:#7ef68d;border-radius:12.75px;"></div>
<div class="t" style="left:906.1px;top:394.0px;font-size:20.8px;line-height:20.8px;color:#f2f2f2;font-weight:normal;letter-spacing:0.45px;">Pan</div>
<div class="r" style="left:870.75px;top:436.55px;width:25.5px;height:25.5px;background:#393d3b;border-radius:12.75px;"></div>
<div class="t" style="left:906.1px;top:438.0px;font-size:20.8px;line-height:20.8px;color:#f2f2f2;font-weight:normal;letter-spacing:0.45px;">Transpose</div>
<div class="r" style="left:870.75px;top:480.55px;width:25.5px;height:25.5px;background:#7ef68d;border-radius:12.75px;"></div>
<div class="t" style="left:906.1px;top:482.0px;font-size:20.8px;line-height:20.8px;color:#f2f2f2;font-weight:normal;letter-spacing:0.45px;">Figure</div>
<div class="r" style="left:870.75px;top:524.55px;width:25.5px;height:25.5px;background:#5a8a6b;border-radius:12.75px;"></div>
<div class="t" style="left:906.1px;top:526.0px;font-size:20.8px;line-height:20.8px;color:#f2f2f2;font-weight:normal;letter-spacing:0.45px;">Pause</div>
<div class="r" style="left:870.75px;top:568.55px;width:25.5px;height:25.5px;background:#7ef68d;border-radius:12.75px;"></div>
<div class="t" style="left:906.1px;top:570.0px;font-size:20.8px;line-height:20.8px;color:#f2f2f2;font-weight:normal;letter-spacing:0.45px;">Interpretation</div>
<div class="r" style="left:870.75px;top:612.55px;width:25.5px;height:25.5px;background:#546a8a;border-radius:12.75px;"></div>
<div class="t" style="left:906.1px;top:614.0px;font-size:20.8px;line-height:20.8px;color:#f2f2f2;font-weight:normal;letter-spacing:0.45px;">Velocity</div>
<div class="r" style="left:870.75px;top:656.55px;width:25.5px;height:25.5px;background:#393d3b;border-radius:12.75px;"></div>
<div class="t" style="left:906.1px;top:658.0px;font-size:20.8px;line-height:20.8px;color:#f2f2f2;font-weight:normal;letter-spacing:0.45px;">Control D</div>
<div class="r" style="left:870.75px;top:700.55px;width:25.5px;height:25.5px;background:#393d3b;border-radius:12.75px;"></div>
<div class="t" style="left:906.1px;top:702.0px;font-size:20.8px;line-height:20.8px;color:#f2f2f2;font-weight:normal;letter-spacing:0.45px;">Patch Select</div>
<div class="r" style="left:870.75px;top:744.55px;width:25.5px;height:25.5px;background:#393d3b;border-radius:12.75px;"></div>
<div class="t" style="left:906.1px;top:746.0px;font-size:20.8px;line-height:20.8px;color:#f2f2f2;font-weight:normal;letter-spacing:0.45px;">Take</div>
<div class="r" style="left:870.75px;top:788.55px;width:25.5px;height:25.5px;background:#393d3b;border-radius:12.75px;"></div>
<div class="t" style="left:906.1px;top:790.0px;font-size:20.8px;line-height:20.8px;color:#f2f2f2;font-weight:normal;letter-spacing:0.45px;">Reverb</div>
<div class="r" style="left:870.75px;top:832.55px;width:25.5px;height:25.5px;background:#393d3b;border-radius:12.75px;"></div>
<div class="t" style="left:906.1px;top:834.0px;font-size:20.8px;line-height:20.8px;color:#f2f2f2;font-weight:normal;letter-spacing:0.45px;">Control B</div>
<div class="r" style="left:870.75px;top:876.55px;width:25.5px;height:25.5px;background:#546a8a;border-radius:12.75px;"></div>
<div class="t" style="left:906.1px;top:878.0px;font-size:20.8px;line-height:20.8px;color:#f2f2f2;font-weight:normal;letter-spacing:0.45px;">Sustain</div>
<div class="r" style="left:870.75px;top:920.55px;width:25.5px;height:25.5px;background:#393d3b;border-radius:12.75px;"></div>
<div class="t" style="left:906.1px;top:922.0px;font-size:20.8px;line-height:20.8px;color:#f2f2f2;font-weight:normal;letter-spacing:0.45px;">Variation</div>
<div class="r" style="left:870.75px;top:964.55px;width:25.5px;height:25.5px;background:#393d3b;border-radius:12.75px;"></div>
<div class="t" style="left:906.1px;top:966.0px;font-size:20.8px;line-height:20.8px;color:#f2f2f2;font-weight:normal;letter-spacing:0.45px;">Modulation</div>
<div class="r" style="left:870.75px;top:1008.55px;width:25.5px;height:25.5px;background:#393d3b;border-radius:12.75px;"></div>
<div class="t" style="left:906.1px;top:1010.0px;font-size:20.8px;line-height:20.8px;color:#f2f2f2;font-weight:normal;letter-spacing:0.45px;">Control C</div>
<div class="r" style="left:870.75px;top:1052.55px;width:25.5px;height:25.5px;background:#7ef68d;border-radius:12.75px;"></div>
<div class="t" style="left:906.1px;top:1054.0px;font-size:20.8px;line-height:20.8px;color:#f2f2f2;font-weight:normal;letter-spacing:0.45px;">Volume</div>
<div class="r" style="left:862px;top:1122px;width:62px;height:46px;background:#474747;border-radius:8px;"></div>
<div class="r" style="left:928px;top:1122px;width:66px;height:46px;background:#474747;border-radius:8px;"></div>
<div class="r" style="left:998px;top:1122px;width:62px;height:46px;background:#474747;border-radius:8px;"></div>
<svg class="r" style="left:862px;top:1122px;" width="62" height="46" viewBox="0 0 62 46"><path d="M40,14.5 Q34,12 30.5,16.5 Q28.5,19.5 30,23 L19.5,33.5 Q18,35.5 20,37.5 Q22,39 24,37.5 L34.5,27 Q38,28.5 41,26.5 Q45,23 43,17.5 L39.5,21 L36,20.5 L35.5,17 Z" fill="none" stroke="#bdbdbd" stroke-width="1.7" stroke-linejoin="round"/><circle cx="22" cy="35.3" r="1.2" fill="#bdbdbd"/></svg>
<div class="t" style="left:928.0px;width:66px;text-align:center;top:1132.6px;font-size:20px;line-height:20px;color:#bbbbbb;font-weight:normal;">S</div>
<div class="t" style="left:998.0px;width:62px;text-align:center;top:1132.6px;font-size:20px;line-height:20px;color:#bbbbbb;font-weight:normal;">M</div>
<div class="r" style="left:866px;top:1174px;width:190px;height:96px;background:#434343;border-radius:14px;"></div>
<div class="t" style="left:866.0px;width:190px;text-align:center;top:1208.2px;font-size:21px;line-height:21px;color:#ffffff;font-weight:normal;-webkit-text-stroke:0.75px #fff;">Seq</div>
<div class="r" style="left:1070px;top:276px;width:206px;height:1004px;background:linear-gradient(#646565 0px,#565656 30px,#515151 60px);border-radius:0px;"></div>
<div class="r" style="left:1074px;top:296px;width:68px;height:42px;background:#474747;border-radius:8px;"></div>
<div class="t" style="left:1073.7px;width:68px;text-align:center;top:305.7px;font-size:24px;line-height:24px;color:#b9b9b9;font-weight:bold;">5</div>
<svg class="r" style="left:1242px;top:283px;" width="24" height="24" viewBox="0 0 24 24"><circle cx="12" cy="12" r="9.8" fill="none" stroke="#f4f4f4" stroke-width="1.8"/><path d="M8.2,8.2 L15.8,15.8 M15.8,8.2 L8.2,15.8" stroke="#f4f4f4" stroke-width="1.8"/></svg>
<div class="r" style="left:1082.75px;top:348.55px;width:25.5px;height:25.5px;background:#546a8a;border-radius:12.75px;"></div>
<div class="t" style="left:1118.1px;top:350.0px;font-size:20.8px;line-height:20.8px;color:#f2f2f2;font-weight:normal;letter-spacing:0.45px;">Rhythm</div>
<div class="r" style="left:1082.75px;top:392.55px;width:25.5px;height:25.5px;background:#7ef68d;border-radius:12.75px;"></div>
<div class="t" style="left:1118.1px;top:394.0px;font-size:20.8px;line-height:20.8px;color:#f2f2f2;font-weight:normal;letter-spacing:0.45px;">Pan</div>
<div class="r" style="left:1082.75px;top:436.55px;width:25.5px;height:25.5px;background:#393d3b;border-radius:12.75px;"></div>
<div class="t" style="left:1118.1px;top:438.0px;font-size:20.8px;line-height:20.8px;color:#f2f2f2;font-weight:normal;letter-spacing:0.45px;">Transpose</div>
<div class="r" style="left:1082.75px;top:480.55px;width:25.5px;height:25.5px;background:#7ef68d;border-radius:12.75px;"></div>
<div class="t" style="left:1118.1px;top:482.0px;font-size:20.8px;line-height:20.8px;color:#f2f2f2;font-weight:normal;letter-spacing:0.45px;">Figure</div>
<div class="r" style="left:1082.75px;top:524.55px;width:25.5px;height:25.5px;background:#5a8a6b;border-radius:12.75px;"></div>
<div class="t" style="left:1118.1px;top:526.0px;font-size:20.8px;line-height:20.8px;color:#f2f2f2;font-weight:normal;letter-spacing:0.45px;">Pause</div>
<div class="r" style="left:1082.75px;top:568.55px;width:25.5px;height:25.5px;background:#7ef68d;border-radius:12.75px;"></div>
<div class="t" style="left:1118.1px;top:570.0px;font-size:20.8px;line-height:20.8px;color:#f2f2f2;font-weight:normal;letter-spacing:0.45px;">Interpretation</div>
<div class="r" style="left:1082.75px;top:612.55px;width:25.5px;height:25.5px;background:#546a8a;border-radius:12.75px;"></div>
<div class="t" style="left:1118.1px;top:614.0px;font-size:20.8px;line-height:20.8px;color:#f2f2f2;font-weight:normal;letter-spacing:0.45px;">Velocity</div>
<div class="r" style="left:1082.75px;top:656.55px;width:25.5px;height:25.5px;background:#393d3b;border-radius:12.75px;"></div>
<div class="t" style="left:1118.1px;top:658.0px;font-size:20.8px;line-height:20.8px;color:#f2f2f2;font-weight:normal;letter-spacing:0.45px;">Reverb Width</div>
<div class="r" style="left:1082.75px;top:700.55px;width:25.5px;height:25.5px;background:#393d3b;border-radius:12.75px;"></div>
<div class="t" style="left:1118.1px;top:702.0px;font-size:20.8px;line-height:20.8px;color:#f2f2f2;font-weight:normal;letter-spacing:0.45px;">Master Volume</div>
<div class="r" style="left:1082.75px;top:744.55px;width:25.5px;height:25.5px;background:#393d3b;border-radius:12.75px;"></div>
<div class="t" style="left:1118.1px;top:746.0px;font-size:20.8px;line-height:20.8px;color:#f2f2f2;font-weight:normal;letter-spacing:0.45px;">Take</div>
<div class="r" style="left:1082.75px;top:788.55px;width:25.5px;height:25.5px;background:#393d3b;border-radius:12.75px;"></div>
<div class="t" style="left:1118.1px;top:790.0px;font-size:20.8px;line-height:20.8px;color:#f2f2f2;font-weight:normal;letter-spacing:0.45px;">Reverb</div>
<div class="r" style="left:1082.75px;top:832.55px;width:25.5px;height:25.5px;background:#393d3b;border-radius:12.75px;"></div>
<div class="t" style="left:1118.1px;top:834.0px;font-size:20.8px;line-height:20.8px;color:#f2f2f2;font-weight:normal;letter-spacing:0.45px;">Reverb Gain</div>
<div class="r" style="left:1082.75px;top:876.55px;width:25.5px;height:25.5px;background:#546a8a;border-radius:12.75px;"></div>
<div class="t" style="left:1118.1px;top:878.0px;font-size:20.8px;line-height:20.8px;color:#f2f2f2;font-weight:normal;letter-spacing:0.45px;">Sustain</div>
<div class="r" style="left:1082.75px;top:920.55px;width:25.5px;height:25.5px;background:#393d3b;border-radius:12.75px;"></div>
<div class="t" style="left:1118.1px;top:922.0px;font-size:20.8px;line-height:20.8px;color:#f2f2f2;font-weight:normal;letter-spacing:0.45px;">Variation</div>
<div class="r" style="left:1082.75px;top:964.55px;width:25.5px;height:25.5px;background:#393d3b;border-radius:12.75px;"></div>
<div class="t" style="left:1118.1px;top:966.0px;font-size:20.8px;line-height:20.8px;color:#f2f2f2;font-weight:normal;letter-spacing:0.45px;">Modulation</div>
<div class="r" style="left:1082.75px;top:1008.55px;width:25.5px;height:25.5px;background:#393d3b;border-radius:12.75px;"></div>
<div class="t" style="left:1118.1px;top:1010.0px;font-size:20.8px;line-height:20.8px;color:#f2f2f2;font-weight:normal;letter-spacing:0.45px;">Reverb Size</div>
<div class="r" style="left:1082.75px;top:1052.55px;width:25.5px;height:25.5px;background:#7ef68d;border-radius:12.75px;"></div>
<div class="t" style="left:1118.1px;top:1054.0px;font-size:20.8px;line-height:20.8px;color:#f2f2f2;font-weight:normal;letter-spacing:0.45px;">Volume</div>
<div class="r" style="left:1074px;top:1122px;width:62px;height:46px;background:#474747;border-radius:8px;"></div>
<div class="r" style="left:1140px;top:1122px;width:66px;height:46px;background:#474747;border-radius:8px;"></div>
<div class="r" style="left:1210px;top:1122px;width:62px;height:46px;background:#474747;border-radius:8px;"></div>
<svg class="r" style="left:1074px;top:1122px;" width="62" height="46" viewBox="0 0 62 46"><path d="M40,14.5 Q34,12 30.5,16.5 Q28.5,19.5 30,23 L19.5,33.5 Q18,35.5 20,37.5 Q22,39 24,37.5 L34.5,27 Q38,28.5 41,26.5 Q45,23 43,17.5 L39.5,21 L36,20.5 L35.5,17 Z" fill="none" stroke="#bdbdbd" stroke-width="1.7" stroke-linejoin="round"/><circle cx="22" cy="35.3" r="1.2" fill="#bdbdbd"/></svg>
<div class="t" style="left:1140.0px;width:66px;text-align:center;top:1132.6px;font-size:20px;line-height:20px;color:#bbbbbb;font-weight:normal;">S</div>
<div class="t" style="left:1210.0px;width:62px;text-align:center;top:1132.6px;font-size:20px;line-height:20px;color:#bbbbbb;font-weight:normal;">M</div>
<div class="r" style="left:1078px;top:1174px;width:190px;height:96px;background:#434343;border-radius:14px;"></div>
<div class="t" style="left:1078.0px;width:190px;text-align:center;top:1208.2px;font-size:21px;line-height:21px;color:#ffffff;font-weight:normal;-webkit-text-stroke:0.75px #fff;">Kalimba</div>
<div class="r" style="left:1282px;top:276px;width:206px;height:1004px;background:linear-gradient(#646565 0px,#565656 30px,#515151 60px);border-radius:0px;"></div>
<div class="r" style="left:1286px;top:296px;width:68px;height:42px;background:#474747;border-radius:8px;"></div>
<div class="t" style="left:1285.7px;width:68px;text-align:center;top:305.7px;font-size:24px;line-height:24px;color:#b9b9b9;font-weight:bold;">6</div>
<svg class="r" style="left:1454px;top:283px;" width="24" height="24" viewBox="0 0 24 24"><circle cx="12" cy="12" r="9.8" fill="none" stroke="#f4f4f4" stroke-width="1.8"/><path d="M8.2,8.2 L15.8,15.8 M15.8,8.2 L8.2,15.8" stroke="#f4f4f4" stroke-width="1.8"/></svg>
<div class="r" style="left:1294.75px;top:348.55px;width:25.5px;height:25.5px;background:#546a8a;border-radius:12.75px;"></div>
<div class="t" style="left:1330.1px;top:350.0px;font-size:20.8px;line-height:20.8px;color:#f2f2f2;font-weight:normal;letter-spacing:0.45px;">Rhythm</div>
<div class="r" style="left:1294.75px;top:392.55px;width:25.5px;height:25.5px;background:#7ef68d;border-radius:12.75px;"></div>
<div class="t" style="left:1330.1px;top:394.0px;font-size:20.8px;line-height:20.8px;color:#f2f2f2;font-weight:normal;letter-spacing:0.45px;">Pan</div>
<div class="r" style="left:1294.75px;top:436.55px;width:25.5px;height:25.5px;background:#393d3b;border-radius:12.75px;"></div>
<div class="t" style="left:1330.1px;top:438.0px;font-size:20.8px;line-height:20.8px;color:#f2f2f2;font-weight:normal;letter-spacing:0.45px;">Transpose</div>
<div class="r" style="left:1294.75px;top:480.55px;width:25.5px;height:25.5px;background:#7ef68d;border-radius:12.75px;"></div>
<div class="t" style="left:1330.1px;top:482.0px;font-size:20.8px;line-height:20.8px;color:#f2f2f2;font-weight:normal;letter-spacing:0.45px;">Figure</div>
<div class="r" style="left:1294.75px;top:524.55px;width:25.5px;height:25.5px;background:#5a8a6b;border-radius:12.75px;"></div>
<div class="t" style="left:1330.1px;top:526.0px;font-size:20.8px;line-height:20.8px;color:#f2f2f2;font-weight:normal;letter-spacing:0.45px;">Pause</div>
<div class="r" style="left:1294.75px;top:568.55px;width:25.5px;height:25.5px;background:#7ef68d;border-radius:12.75px;"></div>
<div class="t" style="left:1330.1px;top:570.0px;font-size:20.8px;line-height:20.8px;color:#f2f2f2;font-weight:normal;letter-spacing:0.45px;">Interpretation</div>
<div class="r" style="left:1294.75px;top:612.55px;width:25.5px;height:25.5px;background:#546a8a;border-radius:12.75px;"></div>
<div class="t" style="left:1330.1px;top:614.0px;font-size:20.8px;line-height:20.8px;color:#f2f2f2;font-weight:normal;letter-spacing:0.45px;">Velocity</div>
<div class="r" style="left:1294.75px;top:656.55px;width:25.5px;height:25.5px;background:#393d3b;border-radius:12.75px;"></div>
<div class="t" style="left:1330.1px;top:658.0px;font-size:20.8px;line-height:20.8px;color:#f2f2f2;font-weight:normal;letter-spacing:0.45px;">Reverb Width</div>
<div class="r" style="left:1294.75px;top:700.55px;width:25.5px;height:25.5px;background:#393d3b;border-radius:12.75px;"></div>
<div class="t" style="left:1330.1px;top:702.0px;font-size:20.8px;line-height:20.8px;color:#f2f2f2;font-weight:normal;letter-spacing:0.45px;">Master Volume</div>
<div class="r" style="left:1294.75px;top:744.55px;width:25.5px;height:25.5px;background:#393d3b;border-radius:12.75px;"></div>
<div class="t" style="left:1330.1px;top:746.0px;font-size:20.8px;line-height:20.8px;color:#f2f2f2;font-weight:normal;letter-spacing:0.45px;">Take</div>
<div class="r" style="left:1294.75px;top:788.55px;width:25.5px;height:25.5px;background:#393d3b;border-radius:12.75px;"></div>
<div class="t" style="left:1330.1px;top:790.0px;font-size:20.8px;line-height:20.8px;color:#f2f2f2;font-weight:normal;letter-spacing:0.45px;">Reverb</div>
<div class="r" style="left:1294.75px;top:832.55px;width:25.5px;height:25.5px;background:#393d3b;border-radius:12.75px;"></div>
<div class="t" style="left:1330.1px;top:834.0px;font-size:20.8px;line-height:20.8px;color:#f2f2f2;font-weight:normal;letter-spacing:0.45px;">Reverb Gain</div>
<div class="r" style="left:1294.75px;top:876.55px;width:25.5px;height:25.5px;background:#546a8a;border-radius:12.75px;"></div>
<div class="t" style="left:1330.1px;top:878.0px;font-size:20.8px;line-height:20.8px;color:#f2f2f2;font-weight:normal;letter-spacing:0.45px;">Sustain</div>
<div class="r" style="left:1294.75px;top:920.55px;width:25.5px;height:25.5px;background:#393d3b;border-radius:12.75px;"></div>
<div class="t" style="left:1330.1px;top:922.0px;font-size:20.8px;line-height:20.8px;color:#f2f2f2;font-weight:normal;letter-spacing:0.45px;">Variation</div>
<div class="r" style="left:1294.75px;top:964.55px;width:25.5px;height:25.5px;background:#393d3b;border-radius:12.75px;"></div>
<div class="t" style="left:1330.1px;top:966.0px;font-size:20.8px;line-height:20.8px;color:#f2f2f2;font-weight:normal;letter-spacing:0.45px;">Modulation</div>
<div class="r" style="left:1294.75px;top:1008.55px;width:25.5px;height:25.5px;background:#393d3b;border-radius:12.75px;"></div>
<div class="t" style="left:1330.1px;top:1010.0px;font-size:20.8px;line-height:20.8px;color:#f2f2f2;font-weight:normal;letter-spacing:0.45px;">Reverb Size</div>
<div class="r" style="left:1294.75px;top:1052.55px;width:25.5px;height:25.5px;background:#7ef68d;border-radius:12.75px;"></div>
<div class="t" style="left:1330.1px;top:1054.0px;font-size:20.8px;line-height:20.8px;color:#f2f2f2;font-weight:normal;letter-spacing:0.45px;">Volume</div>
<div class="r" style="left:1286px;top:1122px;width:62px;height:46px;background:#474747;border-radius:8px;"></div>
<div class="r" style="left:1352px;top:1122px;width:66px;height:46px;background:#474747;border-radius:8px;"></div>
<div class="r" style="left:1422px;top:1122px;width:62px;height:46px;background:#474747;border-radius:8px;"></div>
<svg class="r" style="left:1286px;top:1122px;" width="62" height="46" viewBox="0 0 62 46"><path d="M40,14.5 Q34,12 30.5,16.5 Q28.5,19.5 30,23 L19.5,33.5 Q18,35.5 20,37.5 Q22,39 24,37.5 L34.5,27 Q38,28.5 41,26.5 Q45,23 43,17.5 L39.5,21 L36,20.5 L35.5,17 Z" fill="none" stroke="#bdbdbd" stroke-width="1.7" stroke-linejoin="round"/><circle cx="22" cy="35.3" r="1.2" fill="#bdbdbd"/></svg>
<div class="t" style="left:1352.0px;width:66px;text-align:center;top:1132.6px;font-size:20px;line-height:20px;color:#bbbbbb;font-weight:normal;">S</div>
<div class="t" style="left:1422.0px;width:62px;text-align:center;top:1132.6px;font-size:20px;line-height:20px;color:#bbbbbb;font-weight:normal;">M</div>
<div class="r" style="left:1290px;top:1174px;width:190px;height:96px;background:#434343;border-radius:14px;"></div>
<div class="t" style="left:1290.0px;width:190px;text-align:center;top:1208.2px;font-size:21px;line-height:21px;color:#ffffff;font-weight:normal;-webkit-text-stroke:0.75px #fff;">Drums</div>
<div class="r" style="left:1949px;top:270px;width:3px;height:1041px;background:#3a3a3a;border-radius:0px;"></div>
<div class="r" style="left:4px;top:270px;width:1948px;height:2.5px;background:#3a3a3a;border-radius:0px;"></div>
<div class="r" style="left:4px;top:270px;width:2.5px;height:1041px;background:#3a3a3a;border-radius:0px;"></div>
<div class="r" style="left:4px;top:1310px;width:1948px;height:2px;background:#353636;border-radius:0px;"></div>
<div class="r" style="left:1926px;top:278px;width:20px;height:970px;background:#525252;border-radius:10px;"></div>
<div class="r" style="left:1922px;top:1282px;width:27px;height:26px;background:#686868;border-radius:0px;"></div>
<div class="r" style="left:2396px;top:202px;width:4px;height:1598px;background:#5b5b5b;border-radius:0px;"></div>
<div class="r" style="left:1968px;top:214px;width:281px;height:49px;background:#414141;border-radius:12px;box-shadow:0 1px 1px rgba(0,0,0,0.3);"></div>
<div class="r" style="left:1968px;top:214px;width:80.5px;height:49px;background:#4169a0;border-radius:12px;border-top-right-radius:0;border-bottom-right-radius:0;"></div>
<div class="r" style="left:2048.5px;top:214px;width:1.5px;height:49px;background:#333;border-radius:0px;"></div>
<div class="r" style="left:2135.5px;top:214px;width:1.5px;height:49px;background:#333;border-radius:0px;"></div>
<svg class="r" style="left:1968px;top:214px;" width="81" height="49" viewBox="0 0 81 49"><path d="M24,10.5 V38.5 H56" fill="none" stroke="#fff" stroke-width="2.3" stroke-linecap="round" stroke-linejoin="round"/><path d="M29.5,28.3 L40.3,18.5 L47,25 L54.4,16.4" fill="none" stroke="#fff" stroke-width="2.3" stroke-linecap="round" stroke-linejoin="round"/></svg>
<svg class="r" style="left:2050px;top:214px;" width="86" height="49" viewBox="0 0 86 49"><g fill="none" stroke="#fff" stroke-width="2" stroke-linejoin="round" stroke-linecap="round"><path d="M21.9,17.5 V27.5 M21.9,22.5 H50 Q57,21 62.5,12.5 V34.2 Q57,27.5 51,27"/><rect x="25.6" y="24" width="26" height="10.2" rx="5.1"/><path d="M32,24 V34 M38.5,24 V34 M45,24 V34 M29.5,18 V22.5 M35,18 V22.5 M40.5,18 V22.5" stroke-width="1.7"/></g></svg>
<div class="t" style="left:2136.0px;width:112px;text-align:center;top:228.8px;font-size:25px;line-height:25px;color:#ffffff;font-weight:normal;-webkit-text-stroke:0.75px #fff;">Matrix</div>
<div class="t" style="left:1964.5px;top:289.5px;font-size:39px;line-height:39px;color:#ededed;font-weight:normal;-webkit-text-stroke:1.1px #ededed;letter-spacing:-0.3px;">Figure</div>
<svg class="r" style="left:1960px;top:340px;" width="240" height="42" viewBox="0 0 240 42"><g fill="none" stroke-width="2" stroke-linecap="round" stroke-linejoin="round">
<path d="M7,31 V22 Q7,6 22,6 Q37,6 37,22 V31" stroke="#8e8e8e"/><rect x="9" y="23" width="6.5" height="13" rx="3.2" stroke="#8e8e8e"/><rect x="28.5" y="23" width="6.5" height="13" rx="3.2" stroke="#8e8e8e"/>
<path d="M55,13 H62 L65,7 H76 L79,13 H84 Q87,13 87,16 V34 Q87,37 84,37 H57 Q54,37 54,34 V16 Q54,13 57,13 Z" stroke="#fff"/><circle cx="70.5" cy="25" r="6" stroke="#fff"/>
<path d="M108,9 H133 Q136,9 136,12 V33 Q136,36 133,36 H108 L97,22.5 Z" stroke="#fff"/><path d="M115.5,17.5 L124.5,27 M124.5,17.5 L115.5,27" stroke="#fff"/>
<path d="M166,5.5 L181,13 L166,20.5 L151,13 Z" stroke="#8e8e8e"/><path d="M154,18 L151,20 L166,27.5 L181,20 L178,18" stroke="#8e8e8e"/><path d="M154,25 L151,27 L166,35 L181,27 L178,25" stroke="#8e8e8e"/>
<rect x="200" y="6.5" width="28.5" height="28.5" rx="3.5" stroke="#fff"/><path d="M207.5,17.5 L214.2,24.5 L221,17.5" stroke="#fff"/>
</g></svg>
<div class="r" style="left:1980px;top:426px;width:394px;height:46px;background:#416391;border-radius:8px;box-shadow:0 1.5px 1px rgba(0,0,0,0.3);"></div>
<div class="t" style="left:1980.0px;width:394px;text-align:center;top:440.4px;font-size:22px;line-height:22px;color:#ffffff;font-weight:normal;letter-spacing:0.65px;-webkit-text-stroke:0.65px #fff;">Figure Recognition Settings</div>
<div class="t" style="left:1999px;top:499.8px;font-size:25px;line-height:25px;color:#b4b4b4;font-weight:normal;">Segment</div>
<div class="r" style="left:1968px;top:530px;width:420px;height:403px;background:#505050;border-radius:14px;"></div>
<div class="t" style="left:1902.0px;width:200px;text-align:right;top:554.8px;font-size:21.5px;line-height:21.5px;color:#f4f4f4;font-weight:normal;">Anchor</div>
<svg class="r" style="left:2108px;top:546px;" width="32" height="110" viewBox="0 0 32 110"><circle cx="16.5" cy="16.5" r="13.5" fill="#4169a0"/><circle cx="16.5" cy="16" r="5.8" fill="#fff"/><circle cx="17.4" cy="53" r="13.6" fill="#8a8a8a"/><path d="M3.8,54 A13.6,13.6 0 0 1 22,40.3" fill="none" stroke="#222" stroke-width="1.1" opacity="0.85"/><circle cx="17.4" cy="89" r="13.6" fill="#8a8a8a"/><path d="M3.8,90 A13.6,13.6 0 0 1 22,76.3" fill="none" stroke="#222" stroke-width="1.1" opacity="0.85"/></svg>
<div class="t" style="left:2146px;top:553.5px;font-size:23px;line-height:23px;color:#f4f4f4;font-weight:normal;">Strong</div>
<div class="t" style="left:2146px;top:589.1px;font-size:23px;line-height:23px;color:#f4f4f4;font-weight:normal;">Medium</div>
<div class="t" style="left:2146px;top:624.5px;font-size:23px;line-height:23px;color:#f4f4f4;font-weight:normal;">Weak</div>
<div class="r" style="left:2288px;top:552px;width:82px;height:40px;background:#416391;border-radius:8px;box-shadow:0 1.5px 1px rgba(0,0,0,0.3);"></div>
<div class="t" style="left:2288.0px;width:82px;text-align:center;top:562.2px;font-size:22px;line-height:22px;color:#ffffff;font-weight:normal;-webkit-text-stroke:0.7px #fff;">Reset</div>
<div class="t" style="left:1988.6px;top:650.0px;font-size:22px;line-height:22px;color:#f4f4f4;font-weight:normal;">Articulation</div>
<div class="r" style="left:1980px;top:680px;width:267px;height:39px;background:#363636;border-radius:8px;"></div>
<div class="t" style="left:1992.6px;top:689.1px;font-size:23px;line-height:23px;color:#ffffff;font-weight:normal;">None</div>
<svg class="r" style="left:2218px;top:688px;" width="30" height="24" viewBox="0 0 30 24"><path d="M5,8.5 L12,15.5 L19,8.5" fill="none" stroke="#fff" stroke-width="3" stroke-linecap="round" stroke-linejoin="round"/></svg>
<div class="r" style="left:1982px;top:735.6px;width:26px;height:26px;background:#858585;border-radius:6px;"></div>
<div class="r" style="left:2218px;top:735.6px;width:26px;height:26px;background:#858585;border-radius:6px;"></div>
<div class="t" style="left:2018.5px;top:739.3px;font-size:22px;line-height:22px;color:#f4f4f4;font-weight:normal;letter-spacing:0.55px;">Hold Harmony</div>
<div class="t" style="left:2254px;top:739.3px;font-size:22px;line-height:22px;color:#f4f4f4;font-weight:normal;letter-spacing:0.55px;">Bypass VL</div>
<div class="r" style="left:1982px;top:771.6px;width:26px;height:26px;background:#858585;border-radius:6px;"></div>
<div class="r" style="left:2218px;top:771.6px;width:26px;height:26px;background:#858585;border-radius:6px;"></div>
<div class="t" style="left:2018.5px;top:775.3px;font-size:22px;line-height:22px;color:#f4f4f4;font-weight:normal;letter-spacing:0.55px;">Look Ahead</div>
<div class="t" style="left:2254px;top:775.3px;font-size:22px;line-height:22px;color:#a9a9a9;font-weight:normal;letter-spacing:0.55px;">Chromatic</div>
<div class="r" style="left:1982px;top:807.8px;width:26px;height:26px;background:#858585;border-radius:6px;"></div>
<div class="r" style="left:2218px;top:807.8px;width:26px;height:26px;background:#858585;border-radius:6px;"></div>
<div class="t" style="left:2018.5px;top:811.5px;font-size:22px;line-height:22px;color:#f4f4f4;font-weight:normal;letter-spacing:0.55px;">Muted</div>
<div class="t" style="left:2254px;top:811.5px;font-size:22px;line-height:22px;color:#f4f4f4;font-weight:normal;letter-spacing:0.55px;">Ducking</div>
<div class="r" style="left:1982px;top:843.7px;width:26px;height:26px;background:#858585;border-radius:6px;"></div>
<div class="r" style="left:2218px;top:843.7px;width:26px;height:26px;background:#858585;border-radius:6px;"></div>
<div class="t" style="left:2018.5px;top:847.4px;font-size:22px;line-height:22px;color:#a9a9a9;font-weight:normal;letter-spacing:0.55px;">Complete Chord</div>
<div class="t" style="left:2254px;top:847.4px;font-size:22px;line-height:22px;color:#a9a9a9;font-weight:normal;letter-spacing:0.55px;">Lengths</div>
<div class="r" style="left:1980px;top:883px;width:159px;height:37px;background:#4f4f4f;border-radius:8px;box-shadow:0 1.5px 1px rgba(0,0,0,0.35);"></div>
<div class="t" style="left:1993px;top:891.4px;font-size:22px;line-height:22px;color:#a3a3a3;font-weight:normal;width:108px;overflow:hidden;">Inversion F</div>
<svg class="r" style="left:2110px;top:891px;" width="26" height="22" viewBox="0 0 26 22"><path d="M4,7 L11,14 L18,7" fill="none" stroke="#a3a3a3" stroke-width="2.8" stroke-linecap="round" stroke-linejoin="round"/></svg>
<div class="r" style="left:2217px;top:883px;width:157px;height:37px;background:#4f4f4f;border-radius:8px;box-shadow:0 1.5px 1px rgba(0,0,0,0.35);"></div>
<div class="t" style="left:2229px;top:891.4px;font-size:22px;line-height:22px;color:#a3a3a3;font-weight:normal;">Default</div>
<svg class="r" style="left:2345px;top:891px;" width="26" height="22" viewBox="0 0 26 22"><path d="M4,7 L11,14 L18,7" fill="none" stroke="#a3a3a3" stroke-width="2.8" stroke-linecap="round" stroke-linejoin="round"/></svg>
<div class="t" style="left:1999px;top:944.3px;font-size:24.5px;line-height:24.5px;color:#b4b4b4;font-weight:normal;">Symbol</div>
<div class="r" style="left:1968px;top:974px;width:420px;height:256px;background:#505050;border-radius:14px;"></div>
<div class="t" style="left:1900.5px;width:200px;text-align:right;top:1006.7px;font-size:21.5px;line-height:21.5px;color:#f4f4f4;font-weight:normal;">Diatonic</div>
<div class="t" style="left:1900.5px;width:200px;text-align:right;top:1050.3px;font-size:21.5px;line-height:21.5px;color:#f4f4f4;font-weight:normal;">Chromatic</div>
<div class="t" style="left:1900.5px;width:200px;text-align:right;top:1094.7px;font-size:21.5px;line-height:21.5px;color:#f4f4f4;font-weight:normal;">Velocity</div>
<div class="t" style="left:1900.5px;width:200px;text-align:right;top:1138.3px;font-size:21.5px;line-height:21.5px;color:#f4f4f4;font-weight:normal;">Length</div>
<div class="t" style="left:1900.5px;width:200px;text-align:right;top:1186.3px;font-size:21.5px;line-height:21.5px;color:#f4f4f4;font-weight:normal;">Pitch</div>
<div class="r" style="left:2108px;top:1002px;width:104px;height:40px;background:#363636;border-radius:0px;"></div>
<div class="r" style="left:2108px;top:1046px;width:104px;height:40px;background:#363636;border-radius:0px;"></div>
<div class="r" style="left:2108px;top:1090px;width:104px;height:40px;background:#363636;border-radius:0px;"></div>
<div class="r" style="left:2108px;top:1134px;width:220px;height:40px;background:#363636;border-radius:0px;"></div>
<div class="r" style="left:2108px;top:1178px;width:104px;height:40px;background:#474747;border-radius:0px;box-sizing:border-box;border:1px solid #383838;"></div>
<div class="t" style="left:2120.5px;top:1006.7px;font-size:24px;line-height:24px;color:#f4f4f4;font-weight:bold;">*</div>
<div class="t" style="left:2120.5px;top:1094.7px;font-size:24px;line-height:24px;color:#f4f4f4;font-weight:bold;">*</div>
<div class="t" style="left:2120.5px;top:1138.7px;font-size:24px;line-height:24px;color:#f4f4f4;font-weight:bold;">*</div>
<div class="t" style="left:2120px;top:1051.1px;font-size:23.5px;line-height:23.5px;color:#f4f4f4;font-weight:normal;">0</div>
<div class="t" style="left:2120.5px;top:1183.0px;font-size:22.5px;line-height:22.5px;color:#b0b0b0;font-weight:normal;">Relative</div>
<div class="r" style="left:2222px;top:1004px;width:156px;height:36px;background:#4f4f4f;border-radius:8px;box-shadow:0 1.5px 1px rgba(0,0,0,0.35);"></div>
<div class="t" style="left:2233px;top:1011.5px;font-size:23px;line-height:23px;color:#a3a3a3;font-weight:normal;">Mapped</div>
<svg class="r" style="left:2350px;top:1011px;" width="26" height="22" viewBox="0 0 26 22"><path d="M4,7 L11,14 L18,7" fill="none" stroke="#a3a3a3" stroke-width="2.8" stroke-linecap="round" stroke-linejoin="round"/></svg>
<div class="r" style="left:116px;top:1346px;width:44px;height:47px;background:#535353;border-radius:6px;"></div>
<svg class="r" style="left:0;top:0" width="2400" height="1800" viewBox="0 0 2400 1800"><g fill="none" stroke="#f4f4f4" stroke-width="2.2" stroke-linecap="round" stroke-linejoin="round">
<path d="M34,1351 Q42,1351 42,1358 V1376 Q42,1383 34,1383 M50,1351 Q42,1351 42,1358 M50,1383 Q42,1383 42,1376 M38,1367 H46"/>
<path d="M84,1352 H78 V1381 H84 M97,1352 H103 V1381 H97" stroke="#9a9a9a" stroke-width="2"/>
<circle cx="195.3" cy="1357.5" r="4.6"/><circle cx="176.5" cy="1366.2" r="4.6"/><circle cx="195.3" cy="1375" r="4.6"/><path d="M180.7,1364.2 L191.2,1359.5 M180.7,1368.2 L191.2,1373"/>
<path d="M216.5,1382 L219,1371 L241,1349 Q244,1346.5 247,1349.5 Q249.5,1352.5 247,1355 L225,1377 Z M237.5,1352.5 L243.5,1358.5 M230,1382 H252"/>
<path d="M267,1363 L280,1350 Q284,1347 287,1350 Q290,1353 287,1356 L270,1373 Q267,1376 270,1379 Q273,1382 276,1379 L290,1365 Q293,1362 296,1365 Q299,1369 296,1372 L288,1380"/>
<circle cx="320" cy="1357" r="6.5"/><circle cx="320" cy="1377" r="6.5"/><path d="M325,1361.5 L346,1383 M325,1372.5 L346,1351"/>
<path d="M363,1372 L380,1355 Q384,1351 388,1355 L395,1362 Q399,1366 395,1370 L382,1383 H372 Z M372,1383 H394 M370,1365 L386,1381"/>
<path d="M431.6,1372.3 Q437.5,1367.5 437.5,1361 Q437.5,1350.8 425.8,1350.8 Q414.5,1350.8 414.5,1362 V1373.5 Q414.5,1381.6 423,1381.6 Q431.4,1381.6 431.6,1373.5 Z"/>
<path d="M433.5,1362.6 Q433,1355.1 425.8,1355.1 Q418.5,1355.1 418.5,1362 V1365.5 Q422.8,1366.5 421.7,1368.8 L418.3,1372.3"/>
<path d="M455.8,1365.8 Q460,1354 464.9,1354 Q469.8,1354 473.6,1364.2 Q478,1378 483,1378 Q488,1378 492,1366.7"/>
</g>
<path d="M128,1352.5 L128,1377.5 L133.8,1371.8 L138.5,1380.8 L141.8,1379.2 L137.2,1370.3 L146.5,1370.3 Z" fill="none" stroke="#f4f4f4" stroke-width="2" stroke-linejoin="round"/>
<rect x="531.5" y="1368" width="8" height="9.5" rx="1.5" fill="#f4f4f4"/><rect x="541.5" y="1368" width="8" height="9.5" rx="1.5" fill="#f4f4f4"/><rect x="551.5" y="1368" width="8" height="9.5" rx="1.5" fill="#f4f4f4"/>
<path d="M584,1357 V1382 Q596,1377 593,1369 Q590,1365 584,1370" fill="none" stroke="#f4f4f4" stroke-width="2.2"/>
<path d="M593,1357 L607,1354 M593,1364 L607,1361 M597,1350 V1368 M603,1349 V1366" stroke="#f4f4f4" stroke-width="2"/>
</svg>
<div class="r" style="left:508px;top:1346px;width:1.5px;height:47px;background:#3a3a3a;border-radius:0px;"></div>
<div class="r" style="left:627.5px;top:1346px;width:1.5px;height:47px;background:#3a3a3a;border-radius:0px;"></div>
<div class="r" style="left:644px;top:1346px;width:196px;height:42px;background:#4f4f4f;border-radius:8px;"></div>
<div class="r" style="left:652px;top:1354px;width:26px;height:26px;background:#546a8a;border-radius:13px;"></div>
<div class="t" style="left:688.6px;top:1353.9px;font-size:22px;line-height:22px;color:#f4f4f4;font-weight:normal;">Grid</div>
<svg class="r" style="left:850px;top:1351px;" width="32" height="32" viewBox="0 0 32 32"><rect x="2" y="1.5" width="28" height="28" rx="3.5" fill="none" stroke="#f4f4f4" stroke-width="2"/><path d="M9,12 L16,19 L23,12" fill="none" stroke="#f4f4f4" stroke-width="2" stroke-linecap="round" stroke-linejoin="round"/></svg>
<div class="r" style="left:1036.5px;top:1346px;width:19px;height:47px;background:#575757;border-radius:6px;"></div>
<div class="t" style="left:872.7px;width:60px;text-align:center;top:1357.1px;font-size:20.5px;line-height:20.5px;color:#f4f4f4;font-weight:normal;">1</div>
<div class="t" style="left:896.0px;width:60px;text-align:center;top:1357.1px;font-size:20.5px;line-height:20.5px;color:#f4f4f4;font-weight:normal;">2</div>
<div class="t" style="left:920.0px;width:60px;text-align:center;top:1357.1px;font-size:20.5px;line-height:20.5px;color:#f4f4f4;font-weight:normal;">3</div>
<div class="t" style="left:944.0px;width:60px;text-align:center;top:1357.1px;font-size:20.5px;line-height:20.5px;color:#f4f4f4;font-weight:normal;">4</div>
<div class="t" style="left:968.0px;width:60px;text-align:center;top:1357.1px;font-size:20.5px;line-height:20.5px;color:#f4f4f4;font-weight:normal;">5</div>
<div class="t" style="left:992.0px;width:60px;text-align:center;top:1357.1px;font-size:20.5px;line-height:20.5px;color:#f4f4f4;font-weight:normal;">6</div>
<div class="t" style="left:1016.0px;width:60px;text-align:center;top:1357.1px;font-size:20.5px;line-height:20.5px;color:#f4f4f4;font-weight:normal;">8</div>
<div class="t" style="left:1044.0px;width:60px;text-align:center;top:1357.1px;font-size:20.5px;line-height:20.5px;color:#f4f4f4;font-weight:normal;">10</div>
<div class="t" style="left:1082.0px;width:60px;text-align:center;top:1357.1px;font-size:20.5px;line-height:20.5px;color:#f4f4f4;font-weight:normal;">12</div>
<div class="t" style="left:1117.0px;width:60px;text-align:center;top:1357.1px;font-size:20.5px;line-height:20.5px;color:#f4f4f4;font-weight:normal;">16</div>
<div class="t" style="left:1154.0px;width:60px;text-align:center;top:1357.1px;font-size:20.5px;line-height:20.5px;color:#f4f4f4;font-weight:normal;">20</div>
<div class="t" style="left:1190.5px;width:60px;text-align:center;top:1357.1px;font-size:20.5px;line-height:20.5px;color:#f4f4f4;font-weight:normal;">24</div>
<div class="t" style="left:1225.7px;width:60px;text-align:center;top:1357.1px;font-size:20.5px;line-height:20.5px;color:#f4f4f4;font-weight:normal;">32</div>
<svg class="r" style="left:1280px;top:1346px;" width="80" height="47" viewBox="0 0 80 47"><path d="M1.5,24.5 Q1.5,17.5 7.5,17.5 Q11,17.5 15,24.5 Q19,31.5 22.5,31.5 Q28.5,31.5 28.5,24.5 Q28.5,17.5 22.5,17.5 Q19,17.5 15,24.5 Q11,31.5 7.5,31.5 Q1.5,31.5 1.5,24.5 Z" fill="none" stroke="#f4f4f4" stroke-width="2"/><path d="M53.6,6 V36" stroke="#f4f4f4" stroke-width="2.2"/><path d="M39,21 H50 M45.5,16.5 L50,21 L45.5,25.5 M69,21 H57 M61.5,16.5 L57,21 L61.5,25.5" fill="none" stroke="#f4f4f4" stroke-width="1.8" stroke-linecap="round" stroke-linejoin="round"/></svg>
<div class="r" style="left:1364px;top:1346px;width:1.5px;height:48px;background:#3a3a3a;border-radius:0px;"></div>
<div class="r" style="left:1380px;top:1346px;width:44px;height:48px;background:#7fa1d8;border-radius:8px;"></div>
<div class="r" style="left:1385px;top:1351px;width:34px;height:38px;background:#5b87c9;border-radius:5px;"></div>
<div class="t" style="left:1379.5px;width:44px;text-align:center;top:1358.8px;font-size:21.5px;line-height:21.5px;color:#ffffff;font-weight:normal;">H</div>
<svg class="r" style="left:1406px;top:1378px;" width="14" height="12" viewBox="0 0 14 12"><path d="M2,3 L7,8.5 L12,3" fill="none" stroke="#a9c8f4" stroke-width="1.8"/></svg>
<div class="r" style="left:1428px;top:1346px;width:44px;height:48px;background:#95d4d4;border-radius:8px;"></div>
<div class="t" style="left:1427.5px;width:44px;text-align:center;top:1358.8px;font-size:21.5px;line-height:21.5px;color:#ffffff;font-weight:normal;">V</div>
<svg class="r" style="left:1454px;top:1378px;" width="14" height="12" viewBox="0 0 14 12"><path d="M2,3 L7,8.5 L12,3" fill="none" stroke="#c6ffff" stroke-width="1.8"/></svg>
<div class="r" style="left:1476px;top:1346px;width:44px;height:48px;background:#98d4ab;border-radius:8px;"></div>
<div class="t" style="left:1475.5px;width:44px;text-align:center;top:1358.8px;font-size:21.5px;line-height:21.5px;color:#ffffff;font-weight:normal;">C</div>
<svg class="r" style="left:1502px;top:1378px;" width="14" height="12" viewBox="0 0 14 12"><path d="M2,3 L7,8.5 L12,3" fill="none" stroke="#c8ffd8" stroke-width="1.8"/></svg>
<div class="r" style="left:1524px;top:1346px;width:44px;height:48px;background:#d4d18a;border-radius:8px;"></div>
<div class="t" style="left:1523.5px;width:44px;text-align:center;top:1358.8px;font-size:21.5px;line-height:21.5px;color:#ffffff;font-weight:normal;">I</div>
<svg class="r" style="left:1550px;top:1378px;" width="14" height="12" viewBox="0 0 14 12"><path d="M2,3 L7,8.5 L12,3" fill="none" stroke="#fff9b0" stroke-width="1.8"/></svg>
<div class="r" style="left:1572px;top:1346px;width:44px;height:48px;background:#d4b286;border-radius:8px;"></div>
<div class="t" style="left:1571.5px;width:44px;text-align:center;top:1358.8px;font-size:21.5px;line-height:21.5px;color:#ffffff;font-weight:normal;">P</div>
<svg class="r" style="left:1598px;top:1378px;" width="14" height="12" viewBox="0 0 14 12"><path d="M2,3 L7,8.5 L12,3" fill="none" stroke="#ffdcaa" stroke-width="1.8"/></svg>
<div class="r" style="left:1620px;top:1346px;width:44px;height:48px;background:#cb8ab4;border-radius:8px;"></div>
<div class="t" style="left:1619.5px;width:44px;text-align:center;top:1358.8px;font-size:21.5px;line-height:21.5px;color:#ffffff;font-weight:normal;">B</div>
<svg class="r" style="left:1646px;top:1378px;" width="14" height="12" viewBox="0 0 14 12"><path d="M2,3 L7,8.5 L12,3" fill="none" stroke="#f6b4e0" stroke-width="1.8"/></svg>
<div class="r" style="left:1668px;top:1346px;width:44px;height:48px;background:#ad86d1;border-radius:8px;"></div>
<div class="t" style="left:1667.5px;width:44px;text-align:center;top:1358.8px;font-size:21.5px;line-height:21.5px;color:#ffffff;font-weight:normal;">R</div>
<svg class="r" style="left:1694px;top:1378px;" width="14" height="12" viewBox="0 0 14 12"><path d="M2,3 L7,8.5 L12,3" fill="none" stroke="#d9b4ff" stroke-width="1.8"/></svg>
<div class="r" style="left:1780px;top:1346px;width:44px;height:48px;background:#4d4d4d;border-radius:8px;"></div>
<svg class="r" style="left:0;top:0" width="2400" height="1800" viewBox="0 0 2400 1800"><g stroke="#f4f4f4" stroke-width="2.6" fill="#f4f4f4"><path d="M1748,1356.4 H1770 M1748,1366.2 H1770 M1746,1376 H1770"/><rect x="1739" y="1373" width="8" height="8" stroke="none" rx="1"/><path d="M1794,1356.4 H1818 M1796,1366.2 H1818 M1796,1376 H1818"/><rect x="1787" y="1362.2" width="8" height="8" stroke="none" rx="1"/><path d="M1842,1356.4 H1866 M1844.5,1366.2 H1866 M1844.5,1376 H1866"/><rect x="1834.5" y="1352" width="8" height="8" stroke="none" rx="1"/><path d="M1892,1356.4 H1914 M1892,1366.2 H1914 M1892,1376 H1914 M1885,1353.6 L1913,1381.7" /></g></svg>
<div class="r" style="left:1931.5px;top:1346px;width:1.5px;height:48px;background:#3a3a3a;border-radius:0px;"></div>
<div class="r" style="left:4px;top:1400px;width:1948px;height:44px;background:#454545;border-radius:0px;"></div>
<div class="r" style="left:4px;top:1444px;width:1948px;height:340px;background:#363636;border-radius:0px;"></div>
<div class="t" style="left:106.5px;top:1412.3px;font-size:21.5px;line-height:21.5px;color:#b8b8b8;font-weight:normal;letter-spacing:1px;">G7</div>
<div class="t" style="left:386.5px;top:1412.3px;font-size:21.5px;line-height:21.5px;color:#b8b8b8;font-weight:normal;letter-spacing:1px;">G7</div>
<div class="t" style="left:666.5px;top:1412.3px;font-size:21.5px;line-height:21.5px;color:#b8b8b8;font-weight:normal;letter-spacing:1px;">A9sus4</div>
<div class="t" style="left:946.5px;top:1412.3px;font-size:21.5px;line-height:21.5px;color:#b8b8b8;font-weight:normal;letter-spacing:1px;">A9sus4</div>
<div class="t" style="left:1226.5px;top:1412.3px;font-size:21.5px;line-height:21.5px;color:#b8b8b8;font-weight:normal;letter-spacing:1px;">D7sus2</div>
<div class="t" style="left:1506.5px;top:1412.3px;font-size:21.5px;line-height:21.5px;color:#b8b8b8;font-weight:normal;letter-spacing:1px;">D7sus2</div>
<div class="t" style="left:1786.5px;top:1412.3px;font-size:21.5px;line-height:21.5px;color:#b8b8b8;font-weight:normal;letter-spacing:1px;">D7sus2</div>
<svg class="r" style="left:0;top:0" width="2400" height="1800" viewBox="0 0 2400 1800"><defs><clipPath id="tl"><rect x="4" y="1400" width="1948" height="384"/></clipPath></defs><g clip-path="url(#tl)"><circle cx="110.5" cy="1444" r="4" fill="#c4c4c4"/><circle cx="390.5" cy="1444" r="4" fill="#c4c4c4"/><circle cx="670.5" cy="1444" r="4" fill="#c4c4c4"/><circle cx="950.5" cy="1444" r="4" fill="#c4c4c4"/><circle cx="1230.5" cy="1444" r="4" fill="#c4c4c4"/><circle cx="1510.5" cy="1444" r="4" fill="#c4c4c4"/><circle cx="1790.5" cy="1444" r="4" fill="#c4c4c4"/><rect x="4" y="1444" width="1948" height="6" fill="#363636"/><path d="M108,1488.5 H1952" stroke="#9c9c9c" stroke-width="1.5"/><path d="M108.5,1460 V1488" stroke="#9c9c9c" stroke-width="1.5"/><path d="M668.5,1460 V1488" stroke="#9c9c9c" stroke-width="1.5"/><path d="M1228.5,1460 V1488" stroke="#9c9c9c" stroke-width="1.5"/><path d="M1788.5,1460 V1488" stroke="#9c9c9c" stroke-width="1.5"/><path d="M248.5,1474 V1488" stroke="#8a8a8a" stroke-width="1.5"/><path d="M388.5,1474 V1488" stroke="#8a8a8a" stroke-width="1.5"/><path d="M528.5,1474 V1488" stroke="#8a8a8a" stroke-width="1.5"/><path d="M808.5,1474 V1488" stroke="#8a8a8a" stroke-width="1.5"/><path d="M948.5,1474 V1488" stroke="#8a8a8a" stroke-width="1.5"/><path d="M1088.5,1474 V1488" stroke="#8a8a8a" stroke-width="1.5"/><path d="M1368.5,1474 V1488" stroke="#8a8a8a" stroke-width="1.5"/><path d="M1508.5,1474 V1488" stroke="#8a8a8a" stroke-width="1.5"/><path d="M1648.5,1474 V1488" stroke="#8a8a8a" stroke-width="1.5"/><path d="M1928.5,1474 V1488" stroke="#8a8a8a" stroke-width="1.5"/><path d="M108,1703.0 H1228" stroke="#575757" stroke-width="1.5"/><path d="M108,1688.5 H1228" stroke="#575757" stroke-width="1.5"/><path d="M108,1674.0 H1228" stroke="#575757" stroke-width="1.5"/><path d="M108,1659.5 H1228" stroke="#575757" stroke-width="1.5"/><path d="M108,1645.0 H1228" stroke="#575757" stroke-width="1.5"/><path d="M108,1630.5 H1228" stroke="#575757" stroke-width="1.5"/><path d="M108,1601.5 H1228" stroke="#575757" stroke-width="1.5"/><path d="M108,1587.0 H1228" stroke="#575757" stroke-width="1.5"/><path d="M108,1572.5 H1228" stroke="#575757" stroke-width="1.5"/><path d="M108,1558.0 H1228" stroke="#575757" stroke-width="1.5"/><path d="M108,1543.5 H1228" stroke="#575757" stroke-width="1.5"/><path d="M108,1529.0 H1228" stroke="#575757" stroke-width="1.5"/><path d="M108,1616.0 H1228" stroke="#b4b4b4" stroke-width="1.5"/><path d="M108.5,1492 V1749" stroke="#a4a4a4" stroke-width="1.5"/><path d="M248.5,1492 V1749" stroke="#5c5c5c" stroke-width="1.5"/><path d="M388.5,1492 V1749" stroke="#5c5c5c" stroke-width="1.5"/><path d="M528.5,1492 V1749" stroke="#5c5c5c" stroke-width="1.5"/><path d="M668.5,1492 V1749" stroke="#a4a4a4" stroke-width="1.5"/><path d="M808.5,1492 V1749" stroke="#5c5c5c" stroke-width="1.5"/><path d="M948.5,1492 V1749" stroke="#5c5c5c" stroke-width="1.5"/><path d="M1088.5,1492 V1749" stroke="#5c5c5c" stroke-width="1.5"/><path d="M1228.5,1492 V1749" stroke="#a4a4a4" stroke-width="1.5"/><text x="20.5" y="1603.0" font-family="Liberation Sans" font-size="21" fill="#a6a6a6">1</text><text x="20.5" y="1588.5" font-family="Liberation Sans" font-size="21" fill="#a6a6a6">2</text><text x="20.5" y="1574.0" font-family="Liberation Sans" font-size="21" fill="#a6a6a6">3</text><text x="20.5" y="1559.5" font-family="Liberation Sans" font-size="21" fill="#a6a6a6">4</text><text x="20.5" y="1545.0" font-family="Liberation Sans" font-size="21" fill="#a6a6a6">5</text><text x="20.5" y="1530.5" font-family="Liberation Sans" font-size="21" fill="#a6a6a6">6</text><text x="20.5" y="1632.0" font-family="Liberation Sans" font-size="21" fill="#a6a6a6"><tspan font-size="18">-</tspan>1</text><text x="20.5" y="1646.5" font-family="Liberation Sans" font-size="21" fill="#a6a6a6"><tspan font-size="18">-</tspan>2</text><text x="20.5" y="1661.0" font-family="Liberation Sans" font-size="21" fill="#a6a6a6"><tspan font-size="18">-</tspan>3</text><text x="20.5" y="1675.5" font-family="Liberation Sans" font-size="21" fill="#a6a6a6"><tspan font-size="18">-</tspan>4</text><text x="20.5" y="1690.0" font-family="Liberation Sans" font-size="21" fill="#a6a6a6"><tspan font-size="18">-</tspan>5</text><text x="20.5" y="1704.5" font-family="Liberation Sans" font-size="21" fill="#a6a6a6"><tspan font-size="18">-</tspan>6</text><text x="120.5" y="1473.8" font-family="Liberation Sans" font-size="21" fill="#b0b0b0">1</text><text x="680.5" y="1473.8" font-family="Liberation Sans" font-size="21" fill="#b0b0b0">2</text><text x="1240.5" y="1473.8" font-family="Liberation Sans" font-size="21" fill="#b0b0b0">3</text><text x="1800.5" y="1473.8" font-family="Liberation Sans" font-size="21" fill="#b0b0b0">4</text><path d="M108.5,1514.5 V1616.0" stroke="#cf8fb7" stroke-width="2.4"/><path d="M142.3,1514.5 V1616.0" stroke="#cf8fb7" stroke-width="2.4"/><rect x="108.5" y="1508.74" width="45" height="11.52" fill="#c697b4"/><rect x="100.5" y="1506.5" width="16" height="16" fill="#db78bc"/><rect x="142.3" y="1508.74" width="18" height="11.52" fill="#c697b4"/><rect x="134.3" y="1506.5" width="16" height="16" fill="#db78bc"/><rect x="108.5" y="1610.24" width="45" height="11.52" fill="#c697b4"/><rect x="102.5" y="1610.0" width="12" height="12" fill="#595959" stroke="#db78bc" stroke-width="4"/><rect x="142.3" y="1610.24" width="12" height="11.52" fill="#c697b4"/><rect x="136.3" y="1610.0" width="12" height="12" fill="#595959" stroke="#db78bc" stroke-width="4"/><path d="M108.5,1558.0 V1616.0" stroke="#93c9c9" stroke-width="3"/><rect x="108.5" y="1555.1" width="8" height="5.8" fill="#8fc5c5"/><rect x="103.5" y="1553.0" width="10" height="10" fill="#8ee0e6"/><rect x="108.5" y="1584.1" width="6" height="5.8" fill="#8fc5c5"/><rect x="103.5" y="1582.0" width="10" height="10" fill="#8ee0e6"/><rect x="108.5" y="1613.1" width="8" height="5.8" fill="#8fc5c5"/><rect x="103.5" y="1611.0" width="10" height="10" fill="#8ee0e6"/><rect x="107.3" y="1614.8" width="2.4" height="2.4" fill="#3a3030"/><path d="M95,1566.7 H106.5 M95,1573.2 H106.5 M108,1564.8 L120,1570.0 L108,1575.2" fill="none" stroke="#9ac6c6" stroke-width="2.3"/><path d="M178.8,1558.0 V1616.0" stroke="#93c9c9" stroke-width="3"/><rect x="178.8" y="1555.1" width="8" height="5.8" fill="#8fc5c5"/><rect x="173.8" y="1553.0" width="10" height="10" fill="#8ee0e6"/><rect x="178.8" y="1584.1" width="6" height="5.8" fill="#8fc5c5"/><rect x="173.8" y="1582.0" width="10" height="10" fill="#8ee0e6"/><path d="M172.8,1567.0 H184.8 M172.8,1572.7 H184.8" stroke="#93c9c9" stroke-width="2.2"/><rect x="177.8" y="1610.24" width="12" height="11.52" fill="#c697b4"/><rect x="169.8" y="1608.0" width="16" height="16" fill="#db78bc"/><path d="M178.8,1616.0 L247.8,1514.5" stroke="#cf8fb7" stroke-width="2.4"/><rect x="247.8" y="1508.74" width="19" height="11.52" fill="#c697b4"/><rect x="241.8" y="1508.5" width="12" height="12" fill="#595959" stroke="#db78bc" stroke-width="4"/><rect x="247.8" y="1610.24" width="19" height="11.52" fill="#c697b4"/><rect x="241.8" y="1610.0" width="12" height="12" fill="#595959" stroke="#db78bc" stroke-width="4"/><path d="M247.8,1616.0 L212,1717.5" stroke="#cf8fb7" stroke-width="2.4"/><rect x="204.0" y="1709.5" width="16" height="16" fill="#db78bc"/><path d="M282.5,1558.0 V1616.0" stroke="#93c9c9" stroke-width="3"/><rect x="282.5" y="1555.1" width="8" height="5.8" fill="#8fc5c5"/><rect x="277.5" y="1553.0" width="10" height="10" fill="#8ee0e6"/><rect x="282.5" y="1584.1" width="8" height="5.8" fill="#8fc5c5"/><rect x="277.5" y="1582.0" width="10" height="10" fill="#8ee0e6"/><path d="M276.5,1567.0 H288.5 M276.5,1572.7 H288.5" stroke="#93c9c9" stroke-width="2.2"/><rect x="273.6" y="1608.0" width="16" height="16" fill="#db78bc"/><rect x="289" y="1613.1" width="9" height="5.8" fill="#8fc5c5"/><path d="M282.5,1616.0 L318,1514.5" stroke="#cf8fb7" stroke-width="2.4"/><rect x="318" y="1508.74" width="14" height="11.52" fill="#c697b4"/><rect x="312.0" y="1508.5" width="12" height="12" fill="#595959" stroke="#db78bc" stroke-width="4"/><rect x="351" y="1610.24" width="14" height="11.52" fill="#c697b4"/><rect x="345.0" y="1610.0" width="12" height="12" fill="#595959" stroke="#db78bc" stroke-width="4"/><rect x="369" y="1495" width="94.5" height="140" fill="#5177b0" fill-opacity="0.28" stroke="#5b87c9" stroke-width="2"/><path d="M388.6,1543.5 V1616.0" stroke="#93c9c9" stroke-width="3"/><rect x="388.6" y="1540.6" width="9" height="5.8" fill="#8fc5c5"/><rect x="383.6" y="1538.5" width="10" height="10" fill="#8ee0e6"/><rect x="388.6" y="1569.6" width="10" height="5.8" fill="#8fc5c5"/><rect x="383.6" y="1567.5" width="10" height="10" fill="#8ee0e6"/><rect x="388.6" y="1610.24" width="17" height="11.52" fill="#c697b4"/><rect x="380.6" y="1608.0" width="16" height="16" fill="#db78bc"/><path d="M388.6,1616.0 L421.8,1514.5" stroke="#cf8fb7" stroke-width="2.4"/><rect x="421.8" y="1508.74" width="28" height="11.52" fill="#c697b4"/><rect x="415.8" y="1508.5" width="12" height="12" fill="#595959" stroke="#db78bc" stroke-width="4"/><rect x="458" y="1610.24" width="13" height="11.52" fill="#c697b4"/><rect x="452.0" y="1610.0" width="12" height="12" fill="#595959" stroke="#db78bc" stroke-width="4"/><path d="M492,1558.0 V1616.0" stroke="#93c9c9" stroke-width="3"/><rect x="492" y="1555.1" width="8" height="5.8" fill="#8fc5c5"/><rect x="487.0" y="1553.0" width="10" height="10" fill="#8ee0e6"/><rect x="492" y="1584.1" width="8" height="5.8" fill="#8fc5c5"/><rect x="487.0" y="1582.0" width="10" height="10" fill="#8ee0e6"/><path d="M486,1567.0 H498 M486,1572.7 H498" stroke="#93c9c9" stroke-width="2.2"/><rect x="492" y="1610.24" width="19" height="11.52" fill="#c697b4"/><rect x="484.0" y="1608.0" width="16" height="16" fill="#db78bc"/><path d="M493,1616.0 L527.8,1514.5" stroke="#cf8fb7" stroke-width="2.4"/><rect x="527.8" y="1508.74" width="28" height="11.52" fill="#c697b4"/><rect x="521.8" y="1508.5" width="12" height="12" fill="#595959" stroke="#db78bc" stroke-width="4"/><path d="M599,1529.0 V1630.5" stroke="#93c9c9" stroke-width="3"/><rect x="599" y="1526.1" width="14" height="5.8" fill="#8fc5c5"/><rect x="594.0" y="1524.0" width="10" height="10" fill="#8ee0e6"/><rect x="599" y="1569.6" width="12" height="5.8" fill="#8fc5c5"/><rect x="594.0" y="1567.5" width="10" height="10" fill="#8ee0e6"/><rect x="599" y="1598.6" width="10" height="5.8" fill="#8fc5c5"/><rect x="594.0" y="1596.5" width="10" height="10" fill="#8ee0e6"/><rect x="599" y="1613.1" width="12" height="5.8" fill="#8fc5c5"/><rect x="594.0" y="1611.0" width="10" height="10" fill="#8ee0e6"/><rect x="597.8" y="1614.8" width="2.4" height="2.4" fill="#3a3030"/><rect x="599" y="1627.6" width="14" height="5.8" fill="#8fc5c5"/><rect x="594.0" y="1625.5" width="10" height="10" fill="#8ee0e6"/><rect x="597.8" y="1629.3" width="2.4" height="2.4" fill="#3a3030"/><path d="M585,1581.2 H596.5 M585,1587.7 H596.5 M598,1579.3 L610,1584.5 L598,1589.7" fill="none" stroke="#9ac6c6" stroke-width="2.3"/><path d="M599,1616.0 L562.7,1717.5" stroke="#cf8fb7" stroke-width="2.4"/><rect x="562.7" y="1711.74" width="10" height="11.52" fill="#c697b4"/><rect x="554.7" y="1709.5" width="16" height="16" fill="#db78bc"/><rect x="633" y="1613.1" width="18" height="5.8" fill="#8fc5c5"/><rect x="628.0" y="1611.0" width="10" height="10" fill="#8ee0e6"/><rect x="631.8" y="1614.8" width="2.4" height="2.4" fill="#3a3030"/><path d="M668.4,1717.5 L701.5,1616.0" stroke="#cf8fb7" stroke-width="2.4"/><rect x="668.4" y="1711.74" width="14" height="11.52" fill="#c697b4"/><rect x="660.4" y="1709.5" width="16" height="16" fill="#db78bc"/><rect x="701.5" y="1610.24" width="26" height="11.52" fill="#c697b4"/><rect x="695.5" y="1610.0" width="12" height="12" fill="#595959" stroke="#db78bc" stroke-width="4"/><path d="M738,1558.0 V1616.0" stroke="#93c9c9" stroke-width="3"/><rect x="738" y="1555.1" width="9" height="5.8" fill="#8fc5c5"/><rect x="733.0" y="1553.0" width="10" height="10" fill="#8ee0e6"/><rect x="738" y="1584.1" width="12" height="5.8" fill="#8fc5c5"/><rect x="733.0" y="1582.0" width="10" height="10" fill="#8ee0e6"/><path d="M732,1567.0 H744 M732,1572.7 H744" stroke="#93c9c9" stroke-width="2.2"/><rect x="738" y="1610.24" width="10" height="11.52" fill="#c697b4"/><rect x="730.0" y="1608.0" width="16" height="16" fill="#db78bc"/><path d="M738,1616.0 L808,1514.5" stroke="#cf8fb7" stroke-width="2.4"/><rect x="808" y="1508.74" width="24" height="11.52" fill="#c697b4"/><rect x="802.0" y="1508.5" width="12" height="12" fill="#595959" stroke="#db78bc" stroke-width="4"/><rect x="772" y="1610.24" width="19" height="11.52" fill="#c697b4"/><rect x="764.0" y="1608.0" width="16" height="16" fill="#db78bc"/><path d="M772,1616.0 L877.8,1514.5" stroke="#cf8fb7" stroke-width="2.4"/><rect x="877.8" y="1508.74" width="22" height="11.52" fill="#c697b4"/><rect x="871.8" y="1508.5" width="12" height="12" fill="#595959" stroke="#db78bc" stroke-width="4"/><path d="M842.5,1558.0 V1616.0" stroke="#93c9c9" stroke-width="3"/><rect x="842.5" y="1555.1" width="10" height="5.8" fill="#8fc5c5"/><rect x="837.5" y="1553.0" width="10" height="10" fill="#8ee0e6"/><rect x="842.5" y="1584.1" width="12" height="5.8" fill="#8fc5c5"/><rect x="837.5" y="1582.0" width="10" height="10" fill="#8ee0e6"/><path d="M836.5,1567.0 H848.5 M836.5,1572.7 H848.5" stroke="#93c9c9" stroke-width="2.2"/><rect x="841.8" y="1610.24" width="10" height="11.52" fill="#c697b4"/><rect x="833.8" y="1608.0" width="16" height="16" fill="#db78bc"/><path d="M842,1616.0 L911.7,1514.5" stroke="#cf8fb7" stroke-width="2.4"/><rect x="911.7" y="1508.74" width="20" height="11.52" fill="#c697b4"/><rect x="905.7" y="1508.5" width="12" height="12" fill="#595959" stroke="#db78bc" stroke-width="4"/><path d="M948.5,1543.5 V1616.0" stroke="#93c9c9" stroke-width="3"/><rect x="948.5" y="1540.6" width="12" height="5.8" fill="#8fc5c5"/><rect x="943.5" y="1538.5" width="10" height="10" fill="#8ee0e6"/><rect x="948.5" y="1569.6" width="14" height="5.8" fill="#8fc5c5"/><rect x="943.5" y="1567.5" width="10" height="10" fill="#8ee0e6"/><rect x="947.8" y="1610.24" width="26" height="11.52" fill="#c697b4"/><rect x="939.8" y="1608.0" width="16" height="16" fill="#db78bc"/><path d="M948,1616.0 L981.4,1514.5" stroke="#cf8fb7" stroke-width="2.4"/><rect x="981.4" y="1508.74" width="22" height="11.52" fill="#c697b4"/><rect x="975.4" y="1508.5" width="12" height="12" fill="#595959" stroke="#db78bc" stroke-width="4"/><rect x="1017.8" y="1610.24" width="16" height="11.52" fill="#c697b4"/><rect x="1011.8" y="1610.0" width="12" height="12" fill="#595959" stroke="#db78bc" stroke-width="4"/><path d="M1052,1558.0 V1616.0" stroke="#93c9c9" stroke-width="3"/><rect x="1052" y="1555.1" width="12" height="5.8" fill="#8fc5c5"/><rect x="1047.0" y="1553.0" width="10" height="10" fill="#8ee0e6"/><rect x="1052" y="1584.1" width="14" height="5.8" fill="#8fc5c5"/><rect x="1047.0" y="1582.0" width="10" height="10" fill="#8ee0e6"/><path d="M1046,1567.0 H1058 M1046,1572.7 H1058" stroke="#93c9c9" stroke-width="2.2"/><rect x="1051.4" y="1610.24" width="18" height="11.52" fill="#c697b4"/><rect x="1043.4" y="1608.0" width="16" height="16" fill="#db78bc"/><path d="M1051.4,1616.0 L1087.5,1514.5" stroke="#cf8fb7" stroke-width="2.4"/><rect x="1087.5" y="1508.74" width="24" height="11.52" fill="#c697b4"/><rect x="1081.5" y="1508.5" width="12" height="12" fill="#595959" stroke="#db78bc" stroke-width="4"/><path d="M1108,1566.7 H1119.5 M1108,1573.2 H1119.5 M1121,1564.8 L1133,1570.0 L1121,1575.2" fill="none" stroke="#9ac6c6" stroke-width="2.3"/><path d="M1122.5,1587.0 V1616.0" stroke="#93c9c9" stroke-width="3"/><rect x="1122.5" y="1584.1" width="10" height="5.8" fill="#8fc5c5"/><rect x="1117.5" y="1582.0" width="10" height="10" fill="#8ee0e6"/><rect x="1122" y="1610.24" width="14" height="11.52" fill="#c697b4"/><rect x="1114.0" y="1608.0" width="16" height="16" fill="#db78bc"/><path d="M1122,1616.0 L1192,1514.5" stroke="#cf8fb7" stroke-width="2.4"/><rect x="1192" y="1508.74" width="23" height="11.52" fill="#c697b4"/><rect x="1186.0" y="1508.5" width="12" height="12" fill="#595959" stroke="#db78bc" stroke-width="4"/><path d="M1158.5,1558.0 V1616.0" stroke="#93c9c9" stroke-width="3"/><rect x="1158.5" y="1555.1" width="8" height="5.8" fill="#8fc5c5"/><rect x="1153.5" y="1553.0" width="10" height="10" fill="#8ee0e6"/><path d="M1145,1566.7 H1156.5 M1145,1573.2 H1156.5 M1158,1564.8 L1170,1570.0 L1158,1575.2" fill="none" stroke="#9ac6c6" stroke-width="2.3"/><rect x="1158.5" y="1613.1" width="20" height="5.8" fill="#8fc5c5"/><rect x="1153.5" y="1611.0" width="10" height="10" fill="#8ee0e6"/><rect x="1157.3" y="1614.8" width="2.4" height="2.4" fill="#3a3030"/><path d="M1228,1514.5 V1616.0" stroke="#a6a6a6" stroke-width="2.1"/><path d="M1262,1514.5 V1616.0" stroke="#a6a6a6" stroke-width="2.1"/><rect x="1228" y="1508.74" width="26" height="11.52" fill="#9c9c9c"/><rect x="1220.0" y="1506.5" width="16" height="16" fill="#9c9c9c"/><rect x="1262" y="1508.74" width="20" height="11.52" fill="#9c9c9c"/><rect x="1254.0" y="1506.5" width="16" height="16" fill="#9c9c9c"/><rect x="1228" y="1610.24" width="26" height="11.52" fill="#9c9c9c"/><rect x="1220.0" y="1608.0" width="16" height="16" fill="#9c9c9c"/><rect x="1262" y="1610.24" width="14" height="11.52" fill="#9c9c9c"/><rect x="1256.0" y="1610.0" width="12" height="12" fill="#595959" stroke="#9c9c9c" stroke-width="4"/><rect x="1228" y="1555.1" width="6" height="5.8" fill="#9c9c9c"/><rect x="1223.0" y="1553.0" width="10" height="10" fill="#9c9c9c"/><rect x="1228" y="1584.1" width="6" height="5.8" fill="#9c9c9c"/><rect x="1223.0" y="1582.0" width="10" height="10" fill="#9c9c9c"/><path d="M1244.8,1502 V1535" stroke="#fff" stroke-width="1.8"/><path d="M1250.2,1502 V1535" stroke="#fff" stroke-width="4"/><circle cx="1240.2" cy="1514" r="2.2" fill="#fff"/><circle cx="1240.2" cy="1523.3" r="2.2" fill="#fff"/><path d="M1264.5,1509.5 L1274,1519 L1264.5,1528.5" fill="none" stroke="#fff" stroke-width="3.2" stroke-linecap="round"/><path d="M1299.7,1558.0 V1616.0" stroke="#a6a6a6" stroke-width="2.1"/><rect x="1299.7" y="1555.1" width="6" height="5.8" fill="#9c9c9c"/><rect x="1294.7" y="1553.0" width="10" height="10" fill="#9c9c9c"/><rect x="1299.7" y="1584.1" width="6" height="5.8" fill="#9c9c9c"/><rect x="1294.7" y="1582.0" width="10" height="10" fill="#9c9c9c"/><rect x="1291.7" y="1608.0" width="16" height="16" fill="#9c9c9c"/><path d="M1299.7,1616.0 L1368,1514.5" stroke="#a6a6a6" stroke-width="2.4"/><rect x="1368" y="1508.74" width="20" height="11.52" fill="#9c9c9c"/><rect x="1362.0" y="1508.5" width="12" height="12" fill="#595959" stroke="#9c9c9c" stroke-width="4"/><rect x="1368" y="1610.24" width="20" height="11.52" fill="#9c9c9c"/><rect x="1362.0" y="1610.0" width="12" height="12" fill="#595959" stroke="#9c9c9c" stroke-width="4"/><path d="M1368,1616.0 L1331.6,1717.5" stroke="#a6a6a6" stroke-width="2.4"/><rect x="1323.6" y="1709.5" width="16" height="16" fill="#9c9c9c"/><path d="M1402.7,1558.0 V1616.0" stroke="#a6a6a6" stroke-width="2.1"/><rect x="1402.7" y="1555.1" width="8" height="5.8" fill="#9c9c9c"/><rect x="1397.7" y="1553.0" width="10" height="10" fill="#9c9c9c"/><rect x="1402.7" y="1584.1" width="10" height="5.8" fill="#9c9c9c"/><rect x="1397.7" y="1582.0" width="10" height="10" fill="#9c9c9c"/><rect x="1402.7" y="1610.24" width="14" height="11.52" fill="#9c9c9c"/><rect x="1394.7" y="1608.0" width="16" height="16" fill="#9c9c9c"/><path d="M1402.7,1616.0 L1442,1514.5" stroke="#a6a6a6" stroke-width="2.4"/><rect x="1442" y="1508.74" width="12" height="11.52" fill="#9c9c9c"/><rect x="1436.0" y="1508.5" width="12" height="12" fill="#595959" stroke="#9c9c9c" stroke-width="4"/><rect x="1471.5" y="1610.24" width="14" height="11.52" fill="#9c9c9c"/><rect x="1465.5" y="1610.0" width="12" height="12" fill="#595959" stroke="#9c9c9c" stroke-width="4"/><path d="M1510,1543.5 V1616.0" stroke="#a6a6a6" stroke-width="2.1"/><rect x="1510" y="1540.6" width="8" height="5.8" fill="#9c9c9c"/><rect x="1505.0" y="1538.5" width="10" height="10" fill="#9c9c9c"/><rect x="1510" y="1569.6" width="10" height="5.8" fill="#9c9c9c"/><rect x="1505.0" y="1567.5" width="10" height="10" fill="#9c9c9c"/><rect x="1511" y="1610.24" width="14" height="11.52" fill="#9c9c9c"/><rect x="1503.0" y="1608.0" width="16" height="16" fill="#9c9c9c"/><path d="M1511,1616.0 L1542,1514.5" stroke="#a6a6a6" stroke-width="2.4"/><rect x="1542" y="1508.74" width="28" height="11.52" fill="#9c9c9c"/><rect x="1536.0" y="1508.5" width="12" height="12" fill="#595959" stroke="#9c9c9c" stroke-width="4"/><rect x="1578" y="1610.24" width="14" height="11.52" fill="#9c9c9c"/><rect x="1572.0" y="1610.0" width="12" height="12" fill="#595959" stroke="#9c9c9c" stroke-width="4"/><path d="M1615,1558.0 V1616.0" stroke="#a6a6a6" stroke-width="2.1"/><rect x="1615" y="1555.1" width="8" height="5.8" fill="#9c9c9c"/><rect x="1610.0" y="1553.0" width="10" height="10" fill="#9c9c9c"/><rect x="1615" y="1584.1" width="10" height="5.8" fill="#9c9c9c"/><rect x="1610.0" y="1582.0" width="10" height="10" fill="#9c9c9c"/><rect x="1615.8" y="1610.24" width="16" height="11.52" fill="#9c9c9c"/><rect x="1607.8" y="1608.0" width="16" height="16" fill="#9c9c9c"/><path d="M1615.8,1616.0 L1648.5,1514.5" stroke="#a6a6a6" stroke-width="2.4"/><rect x="1648.5" y="1508.74" width="28" height="11.52" fill="#9c9c9c"/><rect x="1642.5" y="1508.5" width="12" height="12" fill="#595959" stroke="#9c9c9c" stroke-width="4"/><path d="M1719,1529.0 V1630.5" stroke="#a6a6a6" stroke-width="2.1"/><rect x="1719" y="1526.1" width="14" height="5.8" fill="#9c9c9c"/><rect x="1714.0" y="1524.0" width="10" height="10" fill="#9c9c9c"/><rect x="1719" y="1569.6" width="8" height="5.8" fill="#9c9c9c"/><rect x="1714.0" y="1567.5" width="10" height="10" fill="#9c9c9c"/><rect x="1719" y="1598.6" width="8" height="5.8" fill="#9c9c9c"/><rect x="1714.0" y="1596.5" width="10" height="10" fill="#9c9c9c"/><rect x="1719" y="1610.24" width="10" height="11.52" fill="#9c9c9c"/><rect x="1713.0" y="1610.0" width="12" height="12" fill="#595959" stroke="#9c9c9c" stroke-width="4"/><rect x="1719" y="1627.6" width="12" height="5.8" fill="#9c9c9c"/><rect x="1714.0" y="1625.5" width="10" height="10" fill="#9c9c9c"/><rect x="1717.8" y="1629.3" width="2.4" height="2.4" fill="#3a3030"/><path d="M1719,1616.0 L1683.8,1717.5" stroke="#a6a6a6" stroke-width="2.4"/><rect x="1683.8" y="1711.74" width="6" height="11.52" fill="#9c9c9c"/><rect x="1675.8" y="1709.5" width="16" height="16" fill="#9c9c9c"/><rect x="1753" y="1613.1" width="18" height="5.8" fill="#9c9c9c"/><rect x="1748.0" y="1611.0" width="10" height="10" fill="#9c9c9c"/><rect x="1751.8" y="1614.8" width="2.4" height="2.4" fill="#3a3030"/><rect x="1822" y="1610.24" width="26" height="11.52" fill="#9c9c9c"/><rect x="1816.0" y="1610.0" width="12" height="12" fill="#595959" stroke="#9c9c9c" stroke-width="4"/><path d="M1822,1616.0 L1791,1717.5" stroke="#a6a6a6" stroke-width="2.4"/><rect x="1791" y="1711.74" width="10" height="11.52" fill="#9c9c9c"/><rect x="1783.0" y="1709.5" width="16" height="16" fill="#9c9c9c"/><path d="M1859,1558.0 V1616.0" stroke="#a6a6a6" stroke-width="2.1"/><rect x="1859" y="1555.1" width="6" height="5.8" fill="#9c9c9c"/><rect x="1854.0" y="1553.0" width="10" height="10" fill="#9c9c9c"/><rect x="1859" y="1584.1" width="10" height="5.8" fill="#9c9c9c"/><rect x="1854.0" y="1582.0" width="10" height="10" fill="#9c9c9c"/><rect x="1851.0" y="1608.0" width="16" height="16" fill="#9c9c9c"/><path d="M1859,1616.0 L1927.8,1514.5" stroke="#a6a6a6" stroke-width="2.4"/><rect x="1927.8" y="1508.74" width="24" height="11.52" fill="#9c9c9c"/><rect x="1921.8" y="1508.5" width="12" height="12" fill="#595959" stroke="#9c9c9c" stroke-width="4"/><rect x="1892" y="1610.24" width="20" height="11.52" fill="#9c9c9c"/><rect x="1884.0" y="1608.0" width="16" height="16" fill="#9c9c9c"/><path d="M1892,1616.0 L1952,1558.725" stroke="#a6a6a6" stroke-width="2.4"/><circle cx="1904.5" cy="1770.7" r="4.2" fill="#6a6a6a"/><circle cx="1936.5" cy="1770.7" r="10" fill="#6a6a6a"/></g></svg>
<div class="r" style="left:72px;top:1759px;width:745px;height:19px;background:#505050;border-radius:9.5px;"></div>
</body></html>
